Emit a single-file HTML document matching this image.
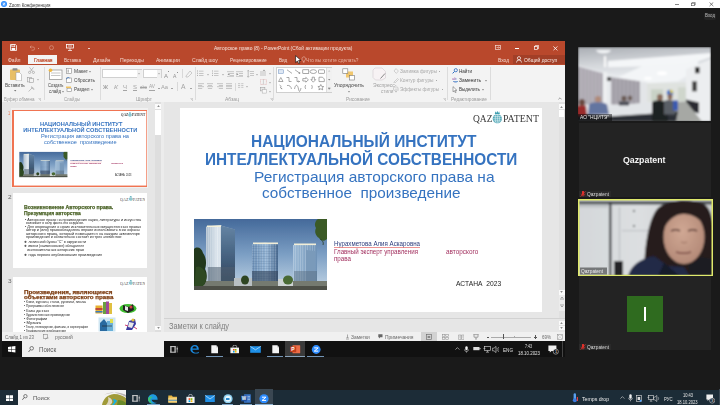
<!DOCTYPE html>
<html><head><meta charset="utf-8">
<style>
*{margin:0;padding:0;box-sizing:border-box}
html,body{width:720px;height:405px;overflow:hidden;background:#1a1a1a;font-family:"Liberation Sans",sans-serif;position:relative}
.a{position:absolute}
.t{position:absolute;white-space:pre;line-height:1}
</style></head><body>
<div class="a" style="left:0px;top:0px;width:720px;height:8px;background:#ffffff;"></div>
<svg class="a" style="left:1px;top:1px;" width="6" height="6" viewBox="0 0 6 6"><circle cx="3" cy="3" r="3" fill="#2d8cff"/><path d="M1.6 2.2h2.6L1.8 3.9h2.6" stroke="#fff" stroke-width="0.8" fill="none"/></svg>
<span class="t" id="t0" style="left:8.50px;top:3.05px;font-size:5px;color:#333;font-weight:normal;font-family:'Liberation Sans';transform:scaleX(0.8979);transform-origin:0 0;">Zoom Конференция</span>
<div class="a" style="left:675px;top:3.6px;width:3.5px;height:0.5px;background:#888;"></div>
<svg class="a" style="left:690.5px;top:2.2px;" width="5" height="4" viewBox="0 0 5 4"><rect x="0.4" y="1.2" width="3" height="2.5" fill="none" stroke="#555" stroke-width="0.6"/><path d="M1.2 1.2V0.4h3v2.6H3.4" fill="none" stroke="#555" stroke-width="0.6"/></svg>
<svg class="a" style="left:708.5px;top:2.2px;" width="5" height="4.5" viewBox="0 0 5 4.5"><path d="M0.5 0.4L4.3 4.1M4.3 0.4L0.5 4.1" stroke="#333" stroke-width="0.6"/></svg>
<div class="a" style="left:703.5px;top:12.5px;width:12.5px;height:7.5px;background:#242424;border-radius:2px"></div>
<span class="t" id="t1" style="left:705.00px;top:13.52px;font-size:4.8px;color:#bdbdbd;font-weight:normal;font-family:'Liberation Sans';transform:scaleX(0.9209);transform-origin:0 0;">Вход</span>
<div class="a" style="left:2px;top:41px;width:563px;height:300px;background:#e6e6e6;"></div>
<div class="a" style="left:2px;top:41px;width:563px;height:23.5px;background:#b9482c;"></div>
<svg class="a" style="left:10px;top:44px;" width="7" height="7" viewBox="0 0 7 7"><path d="M0.5 0.5h5l1 1v5h-6z" fill="none" stroke="#fff" stroke-width="0.8"/><rect x="1.8" y="0.9" width="3" height="1.8" fill="none" stroke="#fff" stroke-width="0.6"/><rect x="1.6" y="3.9" width="3.6" height="2.2" fill="#fff"/></svg>
<svg class="a" style="left:29px;top:45px;" width="6" height="6" viewBox="0 0 6 6"><path d="M1 2h3a1.6 1.6 0 0 1 0 3.2H2.5M1 2l1.3-1.3M1 2l1.3 1.3" fill="none" stroke="#dd9985" stroke-width="0.7"/></svg>
<div class="a" style="left:38px;top:47.5px;width:1px;height:1px;background:#dd9985;"></div>
<svg class="a" style="left:49px;top:45px;" width="5" height="5" viewBox="0 0 5 5"><circle cx="2.5" cy="2.7" r="2" fill="none" stroke="#dd9985" stroke-width="0.7"/></svg>
<svg class="a" style="left:66px;top:44px;" width="8" height="7" viewBox="0 0 8 7"><rect x="0.5" y="0.5" width="7" height="3.5" fill="none" stroke="#fff" stroke-width="0.8"/><path d="M4 4v2.5M2 6.5h4M2 2h4" stroke="#fff" stroke-width="0.7"/></svg>
<div class="a" style="left:88px;top:47.5px;width:1.5px;height:1px;background:#f0d0c8;"></div>
<span class="t" id="t2" style="left:213.80px;top:45.78px;font-size:5.2px;color:#f6e4dd;font-weight:normal;font-family:'Liberation Sans';transform:scaleX(0.9477);transform-origin:0 0;">Авторское право (8) - PowerPoint (Сбой активации продукта)</span>
<svg class="a" style="left:495px;top:45px;" width="6" height="5" viewBox="0 0 6 5"><rect x="0.4" y="0.4" width="5.2" height="4.2" fill="none" stroke="#f5dcd4" stroke-width="0.7"/><path d="M1.5 2.5h3M3.5 1.5l1 1-1 1" stroke="#f5dcd4" stroke-width="0.6" fill="none"/></svg>
<div class="a" style="left:515px;top:48px;width:3.8px;height:0.8px;background:#fff;"></div>
<svg class="a" style="left:534px;top:45px;" width="5" height="5" viewBox="0 0 5 5"><rect x="0.4" y="1.4" width="3.2" height="3.2" fill="none" stroke="#fff" stroke-width="0.7"/><path d="M1.4 1.4V0.4h3.2v3.2H3.6" fill="none" stroke="#fff" stroke-width="0.7"/></svg>
<svg class="a" style="left:553px;top:45.5px;" width="5" height="5" viewBox="0 0 5 5"><path d="M0.4 0.4L4.4 4.4M4.4 0.4L0.4 4.4" stroke="#fff" stroke-width="0.8"/></svg>
<div class="a" style="left:28px;top:54.8px;width:29px;height:9.7px;background:#f3f3f3;"></div>
<span class="t" id="t3" style="left:8.00px;top:57.91px;font-size:5.4px;color:#f3d8cf;font-weight:normal;font-family:'Liberation Sans';transform:scaleX(0.9423);transform-origin:0 0;">Файл</span>
<span class="t" id="t4" style="left:33.50px;top:57.91px;font-size:5.4px;color:#c24a2a;font-weight:normal;font-family:'Liberation Sans';transform:scaleX(0.9011);transform-origin:0 0;-webkit-text-stroke:0.2px #c24a2a;">Главная</span>
<span class="t" id="t5" style="left:64.00px;top:57.91px;font-size:5.4px;color:#f3d8cf;font-weight:normal;font-family:'Liberation Sans';transform:scaleX(0.8480);transform-origin:0 0;">Вставка</span>
<span class="t" id="t6" style="left:92.50px;top:57.91px;font-size:5.4px;color:#f3d8cf;font-weight:normal;font-family:'Liberation Sans';transform:scaleX(0.9655);transform-origin:0 0;">Дизайн</span>
<span class="t" id="t7" style="left:120.00px;top:57.91px;font-size:5.4px;color:#f3d8cf;font-weight:normal;font-family:'Liberation Sans';transform:scaleX(0.9487);transform-origin:0 0;">Переходы</span>
<span class="t" id="t8" style="left:156.20px;top:57.91px;font-size:5.4px;color:#f3d8cf;font-weight:normal;font-family:'Liberation Sans';transform:scaleX(0.9368);transform-origin:0 0;">Анимации</span>
<span class="t" id="t9" style="left:191.70px;top:57.91px;font-size:5.4px;color:#f3d8cf;font-weight:normal;font-family:'Liberation Sans';transform:scaleX(0.9329);transform-origin:0 0;">Слайд шоу</span>
<span class="t" id="t10" style="left:230.00px;top:57.91px;font-size:5.4px;color:#f3d8cf;font-weight:normal;font-family:'Liberation Sans';transform:scaleX(0.8817);transform-origin:0 0;">Рецензирование</span>
<span class="t" id="t11" style="left:278.70px;top:57.91px;font-size:5.4px;color:#f3d8cf;font-weight:normal;font-family:'Liberation Sans';transform:scaleX(0.8499);transform-origin:0 0;">Вид</span>
<span class="t" id="t12" style="left:305.80px;top:57.91px;font-size:5.4px;color:#e9b2a2;font-weight:normal;font-family:'Liberation Sans';transform:scaleX(0.8810);transform-origin:0 0;">Что вы хотите сделать?</span>
<svg class="a" style="left:300.5px;top:56px;" width="5" height="7" viewBox="0 0 5 7"><path d="M1 2.6a1.8 1.8 0 1 1 3.2 1.2c-0.5 0.6-0.8 0.9-0.8 1.6H2c0-0.7-0.3-1-0.6-1.4A1.8 1.8 0 0 1 1 2.6zM2 6.2h1.4" fill="none" stroke="#efc0b2" stroke-width="0.6"/></svg>
<span class="t" id="t13" style="left:498.00px;top:57.88px;font-size:5.2px;color:#f3d8cf;font-weight:normal;font-family:'Liberation Sans';transform:scaleX(0.9362);transform-origin:0 0;">Вход</span>
<div class="a" style="left:513px;top:55px;width:52px;height:8.8px;background:#a23f27;"></div>
<svg class="a" style="left:516px;top:56px;" width="6" height="7" viewBox="0 0 6 7"><circle cx="3" cy="2.2" r="1.6" fill="none" stroke="#fff" stroke-width="0.7"/><path d="M0.5 6.5a2.5 2.5 0 0 1 5 0" fill="none" stroke="#fff" stroke-width="0.7"/></svg>
<span class="t" id="t14" style="left:523.80px;top:57.81px;font-size:5.4px;color:#fbeee9;font-weight:normal;font-family:'Liberation Sans';transform:scaleX(0.9167);transform-origin:0 0;">Общий доступ</span>
<svg class="a" style="left:295px;top:54.5px;" width="7" height="9" viewBox="0 0 7 9"><path d="M0.6 0.6V7.6L2.4 6l1.3 2.6 1.2-.6L3.6 5.5H6z" fill="#fff" stroke="#000" stroke-width="0.6"/></svg>
<div class="a" style="left:2px;top:64.5px;width:563px;height:37px;background:#f3f3f3;"></div>
<div class="a" style="left:2px;top:101.5px;width:563px;height:0.8px;background:#d6d6d6;"></div>
<div class="a" style="left:181.6px;top:69px;width:0.6px;height:8.5px;background:#d8d8d8;"></div>
<div class="a" style="left:43.5px;top:66.5px;width:0.7px;height:33.5px;background:#dcdcdc;"></div>
<div class="a" style="left:100.4px;top:66.5px;width:0.7px;height:33.5px;background:#dcdcdc;"></div>
<div class="a" style="left:194.6px;top:66.5px;width:0.7px;height:33.5px;background:#dcdcdc;"></div>
<div class="a" style="left:273px;top:66.5px;width:0.7px;height:33.5px;background:#dcdcdc;"></div>
<div class="a" style="left:446.5px;top:66.5px;width:0.7px;height:33.5px;background:#dcdcdc;"></div>
<div class="a" style="left:490px;top:66.5px;width:0.7px;height:33.5px;background:#dcdcdc;"></div>
<svg class="a" style="left:9px;top:67.5px;" width="14" height="13" viewBox="0 0 14 13"><rect x="1" y="1.5" width="10" height="10.5" rx="0.8" fill="#e8bf66"/><rect x="3.5" y="0.3" width="5" height="2.2" rx="0.6" fill="#8d8d8d"/><path d="M7 4.5h3.5l2 2V12.8H7z" fill="#fff" stroke="#999" stroke-width="0.5"/></svg>
<span class="t" id="t15" style="left:5.00px;top:82.91px;font-size:5.4px;color:#444;font-weight:normal;font-family:'Liberation Sans';transform:scaleX(0.8618);transform-origin:0 0;">Вставить</span>
<svg class="a" style="left:14px;top:90px;" width="3" height="2" viewBox="0 0 3 2"><path d="M0 0h2.4L1.2 1.4z" fill="#777"/></svg>
<svg class="a" style="left:28px;top:67px;" width="7" height="7" viewBox="0 0 7 7"><circle cx="1.6" cy="5.4" r="1.1" fill="none" stroke="#9a9a9a" stroke-width="0.6"/><circle cx="5.4" cy="5.4" r="1.1" fill="none" stroke="#9a9a9a" stroke-width="0.6"/><path d="M2.3 4.5L5.5 0.3M4.7 4.5L1.5 0.3" stroke="#9a9a9a" stroke-width="0.6"/></svg>
<svg class="a" style="left:27px;top:76.5px;" width="8" height="6" viewBox="0 0 8 6"><rect x="0.4" y="0.4" width="4" height="4.5" fill="none" stroke="#a0a0a0" stroke-width="0.6"/><rect x="2.6" y="1.6" width="4" height="4" fill="#f3f3f3" stroke="#a0a0a0" stroke-width="0.6"/></svg>
<svg class="a" style="left:36.5px;top:79px;" width="2" height="2" viewBox="0 0 2 2"><path d="M0 0.2h2L1 1.4z" fill="#999"/></svg>
<svg class="a" style="left:28px;top:85.5px;" width="7" height="6" viewBox="0 0 7 6"><path d="M0.6 5.5L4 2M3 1.2l2.8 2.5M3.4 0.5l3 2.6" stroke="#a8a8a8" stroke-width="0.7" fill="none"/></svg>
<span class="t" id="t16" style="left:4.00px;top:96.68px;font-size:5.2px;color:#9a9a9a;font-weight:normal;font-family:'Liberation Sans';transform:scaleX(0.8652);transform-origin:0 0;">Буфер обмена</span>
<svg class="a" style="left:38px;top:97.5px;" width="3" height="3" viewBox="0 0 3 3"><path d="M0.3 0.3h2.4v2.4M1 1l1.7 1.7" fill="none" stroke="#aaa" stroke-width="0.5"/></svg>
<svg class="a" style="left:47.5px;top:67.5px;" width="15" height="12" viewBox="0 0 15 12"><rect x="1.5" y="2" width="12.5" height="9.5" fill="#fff" stroke="#8a8a8a" stroke-width="0.7"/><rect x="3" y="4.5" width="9.5" height="1" fill="#c8c8c8"/><rect x="3" y="7" width="9.5" height="1" fill="#c8c8c8"/><circle cx="2.5" cy="2.2" r="1.8" fill="#f0b840"/></svg>
<span class="t" id="t17" style="left:47.50px;top:82.91px;font-size:5.4px;color:#444;font-weight:normal;font-family:'Liberation Sans';transform:scaleX(0.7561);transform-origin:0 0;">Создать</span>
<span class="t" id="t18" style="left:48.50px;top:88.71px;font-size:5.4px;color:#444;font-weight:normal;font-family:'Liberation Sans';transform:scaleX(0.8000);transform-origin:0 0;">слайд</span>
<svg class="a" style="left:61.5px;top:90.5px;" width="2" height="2" viewBox="0 0 2 2"><path d="M0 0.2h2L1 1.4z" fill="#666"/></svg>
<svg class="a" style="left:65.5px;top:67.5px;" width="6" height="6" viewBox="0 0 6 6"><rect x="0.4" y="0.4" width="5.2" height="5.2" fill="#fff" stroke="#888" stroke-width="0.6"/><rect x="1.5" y="1.6" width="1.5" height="3" fill="#bbb"/></svg>
<span class="t" id="t19" style="left:73.50px;top:69.21px;font-size:5.4px;color:#444;font-weight:normal;font-family:'Liberation Sans';transform:scaleX(0.9171);transform-origin:0 0;">Макет</span>
<svg class="a" style="left:89px;top:71px;" width="2" height="2" viewBox="0 0 2 2"><path d="M0 0.2h2L1 1.4z" fill="#666"/></svg>
<svg class="a" style="left:65.5px;top:76.5px;" width="6" height="6" viewBox="0 0 6 6"><rect x="0.4" y="1" width="5.2" height="4.6" fill="#fff" stroke="#888" stroke-width="0.6"/><path d="M0.5 2.2a1.8 1.8 0 0 1 3 -1.2" stroke="#2a6bc0" stroke-width="0.8" fill="none"/></svg>
<span class="t" id="t20" style="left:73.50px;top:78.21px;font-size:5.4px;color:#444;font-weight:normal;font-family:'Liberation Sans';transform:scaleX(0.8761);transform-origin:0 0;">Сбросить</span>
<svg class="a" style="left:65.5px;top:85.5px;" width="6" height="6" viewBox="0 0 6 6"><rect x="1" y="2.2" width="4.6" height="3.4" fill="#fff" stroke="#888" stroke-width="0.6"/><rect x="0" y="0.6" width="5" height="1.2" fill="#f0b840"/></svg>
<span class="t" id="t21" style="left:73.50px;top:87.21px;font-size:5.4px;color:#444;font-weight:normal;font-family:'Liberation Sans';transform:scaleX(0.8694);transform-origin:0 0;">Раздел</span>
<svg class="a" style="left:90.5px;top:89px;" width="2" height="2" viewBox="0 0 2 2"><path d="M0 0.2h2L1 1.4z" fill="#666"/></svg>
<span class="t" id="t22" style="left:64.00px;top:96.68px;font-size:5.2px;color:#9a9a9a;font-weight:normal;font-family:'Liberation Sans';transform:scaleX(0.8285);transform-origin:0 0;">Слайды</span>
<div class="a" style="left:102.2px;top:69.2px;width:40px;height:9.2px;background:#fff;border:0.6px solid #d0d0d0"></div>
<div class="a" style="left:137.2px;top:69.8px;width:4.5px;height:8px;background:#f0f0f0;"></div>
<svg class="a" style="left:138.4px;top:73.2px;" width="2" height="1.5" viewBox="0 0 2 1.5"><path d="M0 0.2h2L1 1.4z" fill="#999"/></svg>
<div class="a" style="left:142.5px;top:69.2px;width:19px;height:9.2px;background:#fff;border:0.6px solid #d0d0d0"></div>
<div class="a" style="left:157.3px;top:69.8px;width:3.8px;height:8px;background:#f0f0f0;"></div>
<svg class="a" style="left:158.3px;top:73.2px;" width="2" height="1.5" viewBox="0 0 2 1.5"><path d="M0 0.2h2L1 1.4z" fill="#999"/></svg>
<span class="t" id="t23" style="left:163.50px;top:72.70px;font-size:6px;color:#909090;font-weight:normal;font-family:'Liberation Sans';transform:scaleX(0.9961);transform-origin:0 0;">A</span>
<span class="t" id="t24" style="left:173.00px;top:73.55px;font-size:5px;color:#909090;font-weight:normal;font-family:'Liberation Sans';transform:scaleX(1.0168);transform-origin:0 0;">A</span>
<div class="a" style="left:167.5px;top:70.5px;width:1.2px;height:0.5px;background:#909090;"></div>
<div class="a" style="left:176.5px;top:71.5px;width:1.2px;height:0.5px;background:#909090;"></div>
<span class="t" id="t25" style="left:102.50px;top:84.74px;font-size:5.6px;color:#a4a4a4;font-weight:bold;font-family:'Liberation Sans';transform:scaleX(0.9877);transform-origin:0 0;">Ж</span>
<span class="t" id="t26" style="left:113.50px;top:84.74px;font-size:5.6px;color:#a4a4a4;font-weight:normal;font-family:'Liberation Sans';transform:scaleX(1.2133);transform-origin:0 0;font-style:italic;">К</span>
<span class="t" id="t27" style="left:122.50px;top:84.74px;font-size:5.6px;color:#a4a4a4;font-weight:normal;font-family:'Liberation Sans';transform:scaleX(1.0711);transform-origin:0 0;text-decoration:underline;">Ч</span>
<span class="t" id="t28" style="left:132.50px;top:84.74px;font-size:5.6px;color:#a4a4a4;font-weight:normal;font-family:'Liberation Sans';transform:scaleX(1.0711);transform-origin:0 0;text-decoration:underline;">S</span>
<span class="t" id="t29" style="left:140.00px;top:85.59px;font-size:4.6px;color:#a4a4a4;font-weight:normal;font-family:'Liberation Sans';transform:scaleX(0.9432);transform-origin:0 0;text-decoration:line-through;">abc</span>
<span class="t" id="t30" style="left:149.00px;top:84.25px;font-size:5px;color:#a4a4a4;font-weight:normal;font-family:'Liberation Sans';transform:scaleX(0.9505);transform-origin:0 0;">AV</span>
<div class="a" style="left:149px;top:90px;width:6px;height:0.5px;background:#a4a4a4;"></div>
<div class="a" style="left:158px;top:88px;width:1.5px;height:0.6px;background:#a4a4a4;"></div>
<span class="t" id="t31" style="left:161.00px;top:84.91px;font-size:5.4px;color:#a4a4a4;font-weight:normal;font-family:'Liberation Sans';transform:scaleX(1.0616);transform-origin:0 0;">Aa</span>
<div class="a" style="left:171px;top:88px;width:1.5px;height:0.6px;background:#a4a4a4;"></div>
<div class="a" style="left:176.5px;top:82px;width:0.6px;height:9px;background:#d8d8d8;"></div>
<span class="t" id="t32" style="left:181.00px;top:84.47px;font-size:6.5px;color:#a4a4a4;font-weight:normal;font-family:'Liberation Sans';transform:scaleX(1.0360);transform-origin:0 0;">A</span>
<div class="a" style="left:190px;top:88px;width:1.5px;height:0.6px;background:#a4a4a4;"></div>
<svg class="a" style="left:185px;top:69px;" width="8" height="9" viewBox="0 0 8 9"><path d="M1 7l4-5 2 2-4 4H1z" fill="none" stroke="#b0b0b0" stroke-width="0.6"/></svg>
<span class="t" id="t33" style="left:136.00px;top:96.68px;font-size:5.2px;color:#9a9a9a;font-weight:normal;font-family:'Liberation Sans';transform:scaleX(0.9369);transform-origin:0 0;">Шрифт</span>
<svg class="a" style="left:189.5px;top:97.5px;" width="3" height="3" viewBox="0 0 3 3"><path d="M0.3 0.3h2.4v2.4M1 1l1.7 1.7" fill="none" stroke="#aaa" stroke-width="0.5"/></svg>
<svg class="a" style="left:197px;top:70px;" width="7.5" height="7.800000000000001" viewBox="0 0 7.5 7.800000000000001"><rect x="0" y="0.50" width="1" height="1" fill="#a8a8a8"/><rect x="2" y="0.80" width="4.5" height="0.6" fill="#a8a8a8"/><rect x="0" y="2.70" width="1" height="1" fill="#a8a8a8"/><rect x="2" y="3.00" width="4.5" height="0.6" fill="#a8a8a8"/><rect x="0" y="4.90" width="1" height="1" fill="#a8a8a8"/><rect x="2" y="5.20" width="4.5" height="0.6" fill="#a8a8a8"/></svg>
<svg class="a" style="left:207px;top:74px;" width="2" height="2" viewBox="0 0 2 2"><path d="M0 0.2h2L1 1.4z" fill="#999"/></svg>
<svg class="a" style="left:212px;top:70px;" width="7.5" height="7.800000000000001" viewBox="0 0 7.5 7.800000000000001"><rect x="0" y="0.50" width="1" height="1" fill="#a8a8a8"/><rect x="2" y="0.80" width="4.5" height="0.6" fill="#a8a8a8"/><rect x="0" y="2.70" width="1" height="1" fill="#a8a8a8"/><rect x="2" y="3.00" width="4.5" height="0.6" fill="#a8a8a8"/><rect x="0" y="4.90" width="1" height="1" fill="#a8a8a8"/><rect x="2" y="5.20" width="4.5" height="0.6" fill="#a8a8a8"/></svg>
<svg class="a" style="left:222px;top:74px;" width="2" height="2" viewBox="0 0 2 2"><path d="M0 0.2h2L1 1.4z" fill="#999"/></svg>
<svg class="a" style="left:226.5px;top:70.5px;" width="8" height="6" viewBox="0 0 8 6"><rect x="0" y="0.5" width="7" height="0.6" fill="#aaa"/><rect x="3" y="2.3" width="4" height="0.6" fill="#aaa"/><rect x="3" y="4" width="4" height="0.6" fill="#aaa"/><rect x="0" y="5.5" width="7" height="0.6" fill="#aaa"/><path d="M2.5 2l-2 1.3 2 1.3" fill="#8a8a8a"/></svg>
<svg class="a" style="left:236px;top:70.5px;" width="8" height="6" viewBox="0 0 8 6"><rect x="0" y="0.5" width="7" height="0.6" fill="#aaa"/><rect x="3" y="2.3" width="4" height="0.6" fill="#aaa"/><rect x="3" y="4" width="4" height="0.6" fill="#aaa"/><rect x="0" y="5.5" width="7" height="0.6" fill="#aaa"/><path d="M0.5 2l2 1.3-2 1.3" fill="#8a8a8a"/></svg>
<svg class="a" style="left:246.5px;top:70px;" width="8" height="8" viewBox="0 0 8 8"><rect x="3" y="1" width="4" height="0.6" fill="#aaa"/><rect x="3" y="3" width="4" height="0.6" fill="#aaa"/><rect x="3" y="5" width="4" height="0.6" fill="#aaa"/><path d="M1.2 0.3v7M0.2 1.4l1-1 1 1M0.2 6.2l1 1 1-1" stroke="#8a8a8a" stroke-width="0.5" fill="none"/></svg>
<svg class="a" style="left:256px;top:74px;" width="2" height="2" viewBox="0 0 2 2"><path d="M0 0.2h2L1 1.4z" fill="#999"/></svg>
<svg class="a" style="left:197.5px;top:82.5px;" width="7" height="9.0" viewBox="0 0 7 9.0"><rect x="0.00" y="0.50" width="6.00" height="0.6" fill="#a8a8a8"/><rect x="0.00" y="2.00" width="4.20" height="0.6" fill="#a8a8a8"/><rect x="0.00" y="3.50" width="6.00" height="0.6" fill="#a8a8a8"/><rect x="0.00" y="5.00" width="4.20" height="0.6" fill="#a8a8a8"/></svg>
<svg class="a" style="left:207px;top:82.5px;" width="7" height="9.0" viewBox="0 0 7 9.0"><rect x="0.00" y="0.50" width="6.00" height="0.6" fill="#a8a8a8"/><rect x="0.90" y="2.00" width="4.20" height="0.6" fill="#a8a8a8"/><rect x="0.00" y="3.50" width="6.00" height="0.6" fill="#a8a8a8"/><rect x="0.90" y="5.00" width="4.20" height="0.6" fill="#a8a8a8"/></svg>
<svg class="a" style="left:216.5px;top:82.5px;" width="7" height="9.0" viewBox="0 0 7 9.0"><rect x="0.00" y="0.50" width="6.00" height="0.6" fill="#a8a8a8"/><rect x="1.80" y="2.00" width="4.20" height="0.6" fill="#a8a8a8"/><rect x="0.00" y="3.50" width="6.00" height="0.6" fill="#a8a8a8"/><rect x="1.80" y="5.00" width="4.20" height="0.6" fill="#a8a8a8"/></svg>
<svg class="a" style="left:226px;top:82.5px;" width="7" height="9.0" viewBox="0 0 7 9.0"><rect x="0.00" y="0.50" width="6.00" height="0.6" fill="#a8a8a8"/><rect x="0.00" y="2.00" width="6.00" height="0.6" fill="#a8a8a8"/><rect x="0.00" y="3.50" width="6.00" height="0.6" fill="#a8a8a8"/><rect x="0.00" y="5.00" width="6.00" height="0.6" fill="#a8a8a8"/></svg>
<div class="a" style="left:234.5px;top:83px;width:0.6px;height:8px;background:#d8d8d8;"></div>
<svg class="a" style="left:238px;top:82.5px;" width="6" height="6" viewBox="0 0 6 6"><rect x="0" y="0.5" width="2.2" height="0.6" fill="#aaa"/><rect x="3.2" y="0.5" width="2.2" height="0.6" fill="#aaa"/><rect x="0" y="2.2" width="2.2" height="0.6" fill="#aaa"/><rect x="3.2" y="2.2" width="2.2" height="0.6" fill="#aaa"/><rect x="0" y="3.9" width="2.2" height="0.6" fill="#aaa"/><rect x="3.2" y="3.9" width="2.2" height="0.6" fill="#aaa"/></svg>
<svg class="a" style="left:246px;top:86px;" width="2" height="2" viewBox="0 0 2 2"><path d="M0 0.2h2L1 1.4z" fill="#999"/></svg>
<svg class="a" style="left:259.5px;top:69px;" width="7" height="8" viewBox="0 0 7 8"><path d="M1 7V2M3 7V2M5 7V2" stroke="#b0b0b0" stroke-width="0.7"/><path d="M4 0.5l1.2 1.5h-2.4z" fill="#999"/></svg>
<svg class="a" style="left:268.5px;top:72.5px;" width="2" height="2" viewBox="0 0 2 2"><path d="M0 0.2h2L1 1.4z" fill="#999"/></svg>
<svg class="a" style="left:259.5px;top:78.5px;" width="7" height="6" viewBox="0 0 7 6"><rect x="0.4" y="0.4" width="6" height="5" fill="none" stroke="#d49090" stroke-width="0.5" stroke-dasharray="0.8 0.5"/><path d="M3.4 0.4v5" stroke="#aaa" stroke-width="0.5"/></svg>
<svg class="a" style="left:268.5px;top:81.5px;" width="2" height="2" viewBox="0 0 2 2"><path d="M0 0.2h2L1 1.4z" fill="#999"/></svg>
<svg class="a" style="left:259.5px;top:87px;" width="7" height="7" viewBox="0 0 7 7"><rect x="0.4" y="0.4" width="4.5" height="3.5" fill="#e6e6e6" stroke="#999" stroke-width="0.5"/><rect x="2.2" y="2.6" width="4.5" height="3.5" fill="#f8f8f8" stroke="#aaa" stroke-width="0.5"/></svg>
<svg class="a" style="left:268.5px;top:90.5px;" width="2" height="2" viewBox="0 0 2 2"><path d="M0 0.2h2L1 1.4z" fill="#999"/></svg>
<span class="t" id="t34" style="left:224.50px;top:96.68px;font-size:5.2px;color:#9a9a9a;font-weight:normal;font-family:'Liberation Sans';transform:scaleX(0.9614);transform-origin:0 0;">Абзац</span>
<svg class="a" style="left:270px;top:97.5px;" width="3" height="3" viewBox="0 0 3 3"><path d="M0.3 0.3h2.4v2.4M1 1l1.7 1.7" fill="none" stroke="#aaa" stroke-width="0.5"/></svg>
<div class="a" style="left:276.3px;top:67.3px;width:56px;height:25.3px;background:#fff;border:0.6px solid #cfcfcf"></div>
<div class="a" style="left:326.2px;top:67.8px;width:5.6px;height:24.5px;background:#f1f1f1;border-left:0.5px solid #ddd"></div>
<svg class="a" style="left:327.5px;top:70px;" width="3" height="2" viewBox="0 0 3 2"><path d="M0 1.6h2.4L1.2 0.2z" fill="#bbb"/></svg>
<svg class="a" style="left:327.5px;top:78.5px;" width="3" height="2" viewBox="0 0 3 2"><path d="M0 0h2.4L1.2 1.4z" fill="#888"/></svg>
<svg class="a" style="left:327.5px;top:87px;" width="3" height="3" viewBox="0 0 3 3"><path d="M0 0.3h2.4M0 1h2.4L1.2 2.4z" fill="#888" stroke="#888" stroke-width="0.3"/></svg>
<svg class="a" style="left:277px;top:68px;" width="49" height="24" viewBox="0 0 49 24">
<rect x="1.5" y="1.8" width="5" height="3.6" fill="#dfe8f4" stroke="#6a8ec0" stroke-width="0.5"/>
<path d="M10 1.8l5 3.6" stroke="#707070" stroke-width="0.6"/>
<path d="M18 1.8l5 3.6M23 5.4l-1.5-0.2M23 5.4l-0.4-1.3" stroke="#707070" stroke-width="0.6"/>
<rect x="25.8" y="1.8" width="6" height="3.6" fill="none" stroke="#707070" stroke-width="0.6"/>
<ellipse cx="36.3" cy="3.6" rx="3.2" ry="1.9" fill="none" stroke="#707070" stroke-width="0.6"/>
<rect x="41.5" y="1.8" width="6" height="3.6" rx="0.6" fill="none" stroke="#707070" stroke-width="0.6"/>
<path d="M1.6 13.5l2.2-4 2.2 4z" fill="none" stroke="#707070" stroke-width="0.6"/>
<path d="M9.5 9.5h2.5v4h2.5" fill="none" stroke="#707070" stroke-width="0.6"/>
<path d="M17.5 9.5h2.5v4h2.5M22.5 13.5l-1-0.8M22.5 13.5l-1 0.8" fill="none" stroke="#707070" stroke-width="0.6"/>
<path d="M25.8 10.6h3v-1.2l2.6 2.4-2.6 2.4v-1.2h-3z" fill="none" stroke="#707070" stroke-width="0.6"/>
<path d="M35.2 9.2v2.4h-1.3l2.4 2.6 2.4-2.6h-1.3V9.2z" fill="none" stroke="#707070" stroke-width="0.6"/>
<path d="M42 9.2h3.5l1.8 1.8v2.6H42z" fill="none" stroke="#707070" stroke-width="0.6"/>
<path d="M2.5 17l1.8 1.5-1 0.8 1.5 1.8M4.8 21.1l-0.2-1.2" fill="none" stroke="#707070" stroke-width="0.6"/>
<path d="M10 17.5c2.5-0.5 4 1 4.5 3.5" fill="none" stroke="#707070" stroke-width="0.6"/>
<path d="M17.5 21c1-5 3-5 4 0s2 1 2.5 -1" fill="none" stroke="#707070" stroke-width="0.6"/>
<path d="M28.8 17c-1 1-1 3 0 4" fill="none" stroke="#707070" stroke-width="0.6"/>
<path d="M34.5 17c1 1 1 3 0 4" fill="none" stroke="#707070" stroke-width="0.6"/>
<path d="M43.8 16.5l0.9 1.9 2 0.2-1.5 1.3 0.5 2-1.9-1.1-1.9 1.1 0.5-2-1.5-1.3 2-0.2z" fill="none" stroke="#707070" stroke-width="0.6"/>
</svg>
<svg class="a" style="left:342px;top:67.5px;" width="14" height="13" viewBox="0 0 14 13"><rect x="4" y="3.5" width="7" height="6" fill="#f0b840" opacity="0.75"/><rect x="0.8" y="0.8" width="5" height="4.5" fill="#fff" stroke="#777" stroke-width="0.6"/><rect x="7.5" y="7.5" width="5" height="4.5" fill="#fff" stroke="#777" stroke-width="0.6"/></svg>
<span class="t" id="t35" style="left:334.00px;top:82.71px;font-size:5.4px;color:#444;font-weight:normal;font-family:'Liberation Sans';transform:scaleX(0.9352);transform-origin:0 0;">Упорядочить</span>
<svg class="a" style="left:348px;top:90.5px;" width="2" height="2" viewBox="0 0 2 2"><path d="M0 0.2h2L1 1.4z" fill="#666"/></svg>
<svg class="a" style="left:371.5px;top:67px;" width="15" height="14" viewBox="0 0 15 14"><path d="M3 1h7l3.5 3.5v6.5L10 13H3.5L1 10.5V3z" fill="#f7f2f4" stroke="#d7d0d4" stroke-width="0.7"/><path d="M8.5 11.5l4.5-5" stroke="#888" stroke-width="1"/></svg>
<span class="t" id="t36" style="left:372.50px;top:82.71px;font-size:5.4px;color:#a0a0a0;font-weight:normal;font-family:'Liberation Sans';transform:scaleX(0.9365);transform-origin:0 0;">Экспресс-</span>
<span class="t" id="t37" style="left:380.50px;top:88.71px;font-size:5.4px;color:#a0a0a0;font-weight:normal;font-family:'Liberation Sans';transform:scaleX(0.8715);transform-origin:0 0;">стили</span>
<svg class="a" style="left:394.5px;top:90.5px;" width="2" height="2" viewBox="0 0 2 2"><path d="M0 0.2h2L1 1.4z" fill="#999"/></svg>
<svg class="a" style="left:393px;top:67.5px;" width="6" height="6" viewBox="0 0 6 6"><path d="M1 3l2-2.4 2.4 2.4-2 2.4z" fill="none" stroke="#b8b8b8" stroke-width="0.6"/></svg>
<span class="t" id="t38" style="left:399.50px;top:69.21px;font-size:5.4px;color:#a8a8a8;font-weight:normal;font-family:'Liberation Sans';transform:scaleX(0.8987);transform-origin:0 0;">Заливка фигуры</span>
<div class="a" style="left:439px;top:71px;width:1.3px;height:0.6px;background:#aaa;"></div>
<svg class="a" style="left:393px;top:76.5px;" width="6" height="6" viewBox="0 0 6 6"><path d="M1 5l3.5-3.5 1 1L2 6H1z" fill="none" stroke="#b8b8b8" stroke-width="0.6"/></svg>
<span class="t" id="t39" style="left:399.50px;top:78.21px;font-size:5.4px;color:#a8a8a8;font-weight:normal;font-family:'Liberation Sans';transform:scaleX(0.8885);transform-origin:0 0;">Контур фигуры</span>
<div class="a" style="left:436px;top:80px;width:1.3px;height:0.6px;background:#aaa;"></div>
<svg class="a" style="left:393px;top:85.5px;" width="6" height="6" viewBox="0 0 6 6"><rect x="0.5" y="1" width="4.5" height="3.5" rx="1" fill="none" stroke="#b8b8b8" stroke-width="0.6"/><rect x="1.5" y="2.5" width="4.5" height="2.5" rx="1" fill="#ddd"/></svg>
<span class="t" id="t40" style="left:399.50px;top:87.21px;font-size:5.4px;color:#a8a8a8;font-weight:normal;font-family:'Liberation Sans';transform:scaleX(0.8679);transform-origin:0 0;">Эффекты фигуры</span>
<div class="a" style="left:441.5px;top:89px;width:1.3px;height:0.6px;background:#aaa;"></div>
<span class="t" id="t41" style="left:346.00px;top:96.68px;font-size:5.2px;color:#9a9a9a;font-weight:normal;font-family:'Liberation Sans';transform:scaleX(0.9187);transform-origin:0 0;">Рисование</span>
<span class="t" id="t42" style="left:360.50px;top:96.68px;font-size:5.2px;color:#9a9a9a;font-weight:normal;font-family:'Liberation Sans';"></span>
<svg class="a" style="left:443px;top:97.5px;" width="3" height="3" viewBox="0 0 3 3"><path d="M0.3 0.3h2.4v2.4M1 1l1.7 1.7" fill="none" stroke="#aaa" stroke-width="0.5"/></svg>
<svg class="a" style="left:452px;top:68px;" width="6" height="6" viewBox="0 0 6 6"><circle cx="3.8" cy="2.2" r="1.6" fill="none" stroke="#2a6bc0" stroke-width="0.8"/><path d="M2.6 3.4L0.6 5.4" stroke="#2a6bc0" stroke-width="1"/></svg>
<span class="t" id="t43" style="left:459.00px;top:69.21px;font-size:5.4px;color:#333;font-weight:normal;font-family:'Liberation Sans';transform:scaleX(0.8447);transform-origin:0 0;">Найти</span>
<svg class="a" style="left:451.5px;top:76px;" width="7" height="7" viewBox="0 0 7 7"><text x="0" y="4" font-size="4" fill="#8a5ab0" font-family="Liberation Sans">ab</text><path d="M1 5.5h5" stroke="#2a6bc0" stroke-width="0.6"/><text x="2" y="7" font-size="2.5" fill="#2a6bc0" font-family="Liberation Sans">ac</text></svg>
<span class="t" id="t44" style="left:459.00px;top:78.21px;font-size:5.4px;color:#333;font-weight:normal;font-family:'Liberation Sans';transform:scaleX(0.9078);transform-origin:0 0;">Заменить</span>
<svg class="a" style="left:484.5px;top:80px;" width="2" height="2" viewBox="0 0 2 2"><path d="M0 0.2h2L1 1.4z" fill="#666"/></svg>
<svg class="a" style="left:452px;top:85.5px;" width="6" height="7" viewBox="0 0 6 7"><path d="M1 0.6v5.2l1.3-1.1 1 2 0.8-0.4-1-2h1.8z" fill="#fff" stroke="#555" stroke-width="0.5"/></svg>
<span class="t" id="t45" style="left:459.00px;top:87.21px;font-size:5.4px;color:#333;font-weight:normal;font-family:'Liberation Sans';transform:scaleX(0.8442);transform-origin:0 0;">Выделить</span>
<svg class="a" style="left:481.5px;top:89px;" width="2" height="2" viewBox="0 0 2 2"><path d="M0 0.2h2L1 1.4z" fill="#666"/></svg>
<span class="t" id="t46" style="left:451.00px;top:96.68px;font-size:5.2px;color:#9a9a9a;font-weight:normal;font-family:'Liberation Sans';transform:scaleX(0.9107);transform-origin:0 0;">Редактирование</span>
<svg class="a" style="left:557.5px;top:97px;" width="4" height="3" viewBox="0 0 4 3"><path d="M0.4 2.4L2 0.8 3.6 2.4" fill="none" stroke="#666" stroke-width="0.6"/></svg>
<div class="a" style="left:2px;top:102.3px;width:159px;height:229.7px;background:#e6e6e6;"></div>
<div class="a" style="left:155px;top:102.3px;width:6px;height:229.7px;background:#dedede;"></div>
<div class="a" style="left:155px;top:104px;width:6px;height:4.5px;background:#fbfbfb;"></div>
<svg class="a" style="left:156.5px;top:105.2px;" width="3" height="2" viewBox="0 0 3 2"><path d="M0.2 1.8L1.5 0.3 2.8 1.8z" fill="#666"/></svg>
<div class="a" style="left:155.3px;top:110px;width:5.4px;height:25px;background:#ffffff;"></div>
<div class="a" style="left:155px;top:325.8px;width:6px;height:4.5px;background:#fbfbfb;"></div>
<svg class="a" style="left:156.5px;top:327.1px;" width="3" height="2" viewBox="0 0 3 2"><path d="M0.2 0.2L1.5 1.7 2.8 0.2z" fill="#666"/></svg>
<div class="a" style="left:161px;top:102.3px;width:2.5px;height:229.7px;background:#ececec;"></div>
<div class="a" style="left:163.5px;top:102.3px;width:395px;height:216px;background:#e6e6e6;"></div>
<div class="a" style="left:558.5px;top:102.3px;width:6.5px;height:216px;background:#e0e0e0;"></div>
<div class="a" style="left:558.5px;top:104.2px;width:6px;height:4.7px;background:#fbfbfb;"></div>
<svg class="a" style="left:560px;top:105.5px;" width="3" height="2" viewBox="0 0 3 2"><path d="M0.2 1.8L1.5 0.3 2.8 1.8z" fill="#666"/></svg>
<div class="a" style="left:558.8px;top:110px;width:5.4px;height:7.2px;background:#ffffff;"></div>
<div class="a" style="left:558.5px;top:290px;width:6px;height:21px;background:#ececec;"></div>
<div class="a" style="left:558.5px;top:290px;width:6px;height:4.5px;background:#fbfbfb;"></div>
<svg class="a" style="left:560px;top:291.3px;" width="3" height="2" viewBox="0 0 3 2"><path d="M0.2 0.2L1.5 1.7 2.8 0.2z" fill="#666"/></svg>
<svg class="a" style="left:559.5px;top:296px;" width="4" height="12" viewBox="0 0 4 12"><path d="M0.5 2.5L2 1 3.5 2.5M0.5 4L2 2.5 3.5 4M0.5 8L2 9.5 3.5 8M0.5 9.5L2 11 3.5 9.5" fill="none" stroke="#777" stroke-width="0.6"/></svg>
<div class="a" style="left:163.5px;top:318px;width:401.5px;height:14px;background:#e6e6e6;border-top:0.8px solid #d2d2d2"></div>
<span class="t" id="t47" style="left:168.90px;top:322.32px;font-size:8.8px;color:#808080;font-weight:normal;font-family:'Liberation Sans';transform:scaleX(0.8419);transform-origin:0 0;">Заметки к слайду</span>
<div class="a" style="left:558.5px;top:320.5px;width:6px;height:4.2px;background:#fbfbfb;"></div>
<svg class="a" style="left:560px;top:321.5px;" width="3" height="2" viewBox="0 0 3 2"><path d="M0.2 1.8L1.5 0.3 2.8 1.8z" fill="#666"/></svg>
<div class="a" style="left:558.5px;top:326px;width:6px;height:4.2px;background:#fbfbfb;"></div>
<svg class="a" style="left:560px;top:327.2px;" width="3" height="2" viewBox="0 0 3 2"><path d="M0.2 0.2L1.5 1.7 2.8 0.2z" fill="#666"/></svg>
<div class="a" style="left:180px;top:107.5px;width:362px;height:204px;background:#fff;transform:scale(1.0);transform-origin:0 0;overflow:hidden">
<span class="t" id="t48" style="left:292.50px;top:5.67px;font-size:11px;color:#3a3a3a;font-weight:normal;font-family:'Liberation Serif';transform:scaleX(0.8625);transform-origin:0 0;">QAZ</span>
<svg class="a" style="left:311px;top:3px;" width="13" height="13" viewBox="0 0 13 13"><circle cx="6.3" cy="7.8" r="4.6" fill="#3f9fb0"/><path d="M1.7000000000000002 7.8h9.2M6.3 3.2v9.2M2.39 5.73h7.819999999999999M2.39 9.87h7.819999999999999" stroke="#fff" stroke-width="0.5519999999999999"/><ellipse cx="6.3" cy="7.8" rx="2.07" ry="4.6" fill="none" stroke="#fff" stroke-width="0.5519999999999999"/><path d="M3.77 2.9699999999999998l0.69 -2.76l0.9199999999999999 1.8399999999999999l0.9199999999999999 -2.3l0.9199999999999999 2.3l0.9199999999999999 -1.8399999999999999l0.69 2.76z" fill="#3f9fb0"/></svg>
<span class="t" id="t49" style="left:323.00px;top:5.67px;font-size:11px;color:#3a3a3a;font-weight:normal;font-family:'Liberation Serif';transform:scaleX(0.9014);transform-origin:0 0;">PATENT</span>
<span class="t" id="t50" style="left:70.90px;top:26.70px;font-size:16px;color:#3573c0;font-weight:bold;font-family:'Liberation Sans';transform:scaleX(0.9677);transform-origin:0 0;">НАЦИОНАЛЬНЫЙ ИНСТИТУТ</span>
<span class="t" id="t51" style="left:25.40px;top:44.24px;font-size:15.6px;color:#3573c0;font-weight:bold;font-family:'Liberation Sans';transform:scaleX(0.9836);transform-origin:0 0;">ИНТЕЛЛЕКТУАЛЬНОЙ СОБСТВЕННОСТИ</span>
<span class="t" id="t52" style="left:74.00px;top:62.42px;font-size:14.8px;color:#3573c0;font-weight:normal;font-family:'Liberation Sans';transform:scaleX(1.0455);transform-origin:0 0;">Регистрация авторского права на</span>
<span class="t" id="t53" style="left:82.20px;top:78.42px;font-size:14.8px;color:#3573c0;font-weight:normal;font-family:'Liberation Sans';transform:scaleX(1.0344);transform-origin:0 0;">собственное  произведение</span>
<div class="a" style="left:14px;top:111.4px;width:133px;height:71px;overflow:hidden"><svg class="a" style="left:0;top:0" width="133" height="71" viewBox="0 0 133 71" preserveAspectRatio="none">
<defs>
<filter id="cb" x="-2%" y="-2%" width="104%" height="104%"><feGaussianBlur stdDeviation="0.45"/></filter>
<linearGradient id="sky" x1="0" y1="0" x2="0" y2="1"><stop offset="0" stop-color="#44699a"/><stop offset="0.5" stop-color="#7c9fc4"/><stop offset="1" stop-color="#c4d6e6"/></linearGradient>
<linearGradient id="b1l" x1="0" y1="0" x2="1" y2="0"><stop offset="0" stop-color="#aabccc"/><stop offset="0.4" stop-color="#dde6ee"/><stop offset="1" stop-color="#8aa2ba"/></linearGradient>
<linearGradient id="b1r" x1="0" y1="0" x2="0" y2="1"><stop offset="0" stop-color="#6484a4"/><stop offset="0.5" stop-color="#44607e"/><stop offset="1" stop-color="#2e3e50"/></linearGradient>
<linearGradient id="b2" x1="0" y1="0" x2="1" y2="0"><stop offset="0" stop-color="#6a8eb6"/><stop offset="0.55" stop-color="#94b4d4"/><stop offset="1" stop-color="#4a6a90"/></linearGradient>
<linearGradient id="b3" x1="0" y1="0" x2="1" y2="0"><stop offset="0" stop-color="#9cbad6"/><stop offset="1" stop-color="#6f92b6"/></linearGradient>
</defs>
<g filter="url(#cb)">
<rect width="133" height="71" fill="url(#sky)"/>
<path d="M12 7.5l15 -1.5l1 1l13 3.5V71H12z" fill="url(#b1l)"/>
<rect x="12.0" y="8" width="0.6" height="60" fill="#ffffff" opacity="0.35"/><rect x="14.2" y="8" width="0.6" height="60" fill="#ffffff" opacity="0.35"/><rect x="16.4" y="8" width="0.6" height="60" fill="#ffffff" opacity="0.35"/><rect x="18.6" y="8" width="0.6" height="60" fill="#ffffff" opacity="0.35"/><rect x="20.8" y="8" width="0.6" height="60" fill="#ffffff" opacity="0.35"/><rect x="23.0" y="8" width="0.6" height="60" fill="#ffffff" opacity="0.35"/><rect x="25.2" y="8" width="0.6" height="60" fill="#ffffff" opacity="0.35"/>
<path d="M27 6.5L41 10.5V71H27z" fill="url(#b1r)"/>
<rect x="13" y="6.5" width="14" height="1.5" fill="#f4f0d8"/>
<rect x="14" y="48" width="27" height="23" fill="#4e5e70" opacity="0.55"/>
<path d="M58 25l13 -1.5l13 2V71H58z" fill="url(#b2)"/>
<rect x="58.0" y="25" width="0.5" height="40" fill="#d8e6f2" opacity="0.5"/><rect x="60.6" y="25" width="0.5" height="40" fill="#d8e6f2" opacity="0.5"/><rect x="63.2" y="25" width="0.5" height="40" fill="#d8e6f2" opacity="0.5"/><rect x="65.8" y="25" width="0.5" height="40" fill="#d8e6f2" opacity="0.5"/><rect x="68.4" y="25" width="0.5" height="40" fill="#d8e6f2" opacity="0.5"/><rect x="71.0" y="25" width="0.5" height="40" fill="#d8e6f2" opacity="0.5"/><rect x="73.6" y="25" width="0.5" height="40" fill="#d8e6f2" opacity="0.5"/><rect x="76.2" y="25" width="0.5" height="40" fill="#d8e6f2" opacity="0.5"/><rect x="78.8" y="25" width="0.5" height="40" fill="#d8e6f2" opacity="0.5"/><rect x="81.4" y="25" width="0.5" height="40" fill="#d8e6f2" opacity="0.5"/><rect x="58" y="27.0" width="26" height="0.4" fill="#3d5a7a" opacity="0.35"/><rect x="58" y="29.5" width="26" height="0.4" fill="#3d5a7a" opacity="0.35"/><rect x="58" y="32.0" width="26" height="0.4" fill="#3d5a7a" opacity="0.35"/><rect x="58" y="34.5" width="26" height="0.4" fill="#3d5a7a" opacity="0.35"/><rect x="58" y="37.0" width="26" height="0.4" fill="#3d5a7a" opacity="0.35"/><rect x="58" y="39.5" width="26" height="0.4" fill="#3d5a7a" opacity="0.35"/><rect x="58" y="42.0" width="26" height="0.4" fill="#3d5a7a" opacity="0.35"/><rect x="58" y="44.5" width="26" height="0.4" fill="#3d5a7a" opacity="0.35"/><rect x="58" y="47.0" width="26" height="0.4" fill="#3d5a7a" opacity="0.35"/><rect x="58" y="49.5" width="26" height="0.4" fill="#3d5a7a" opacity="0.35"/><rect x="58" y="52.0" width="26" height="0.4" fill="#3d5a7a" opacity="0.35"/><rect x="58" y="54.5" width="26" height="0.4" fill="#3d5a7a" opacity="0.35"/><rect x="58" y="57.0" width="26" height="0.4" fill="#3d5a7a" opacity="0.35"/><rect x="58" y="59.5" width="26" height="0.4" fill="#3d5a7a" opacity="0.35"/>
<rect x="59" y="23.5" width="25" height="1.6" fill="#f2eed8"/>
<rect x="58" y="52" width="26" height="19" fill="#34445a" opacity="0.6"/>
<path d="M99 26l13 -1l11 1.5V71H99z" fill="url(#b3)"/>
<rect x="99.0" y="26" width="0.5" height="40" fill="#e8f0f8" opacity="0.5"/><rect x="101.4" y="26" width="0.5" height="40" fill="#e8f0f8" opacity="0.5"/><rect x="103.8" y="26" width="0.5" height="40" fill="#e8f0f8" opacity="0.5"/><rect x="106.2" y="26" width="0.5" height="40" fill="#e8f0f8" opacity="0.5"/><rect x="108.6" y="26" width="0.5" height="40" fill="#e8f0f8" opacity="0.5"/><rect x="111.0" y="26" width="0.5" height="40" fill="#e8f0f8" opacity="0.5"/><rect x="113.4" y="26" width="0.5" height="40" fill="#e8f0f8" opacity="0.5"/><rect x="115.8" y="26" width="0.5" height="40" fill="#e8f0f8" opacity="0.5"/><rect x="118.2" y="26" width="0.5" height="40" fill="#e8f0f8" opacity="0.5"/><rect x="120.6" y="26" width="0.5" height="40" fill="#e8f0f8" opacity="0.5"/>
<rect x="100" y="24.5" width="22" height="1.6" fill="#f2eed8"/>
<path d="M112 31l9 1V71h-9z" fill="#7a9aba"/>
<rect x="100" y="52" width="23" height="19" fill="#566a7c" opacity="0.45"/>
<rect x="0" y="62" width="133" height="9" fill="#747a70"/>
<rect x="40" y="59" width="18" height="9" fill="#b8bfc2"/>
<rect x="84" y="60" width="15" height="8" fill="#cdd3d4"/>
<path d="M0 30c3-3 8-1 9 4c3 4 4 10 2 16c3 5 2 12-1 16l-10 3z" fill="#22381a"/>
<path d="M2 48c4-2 9 2 10 8c1 6-2 11-6 13H0z" fill="#2e4a22"/>
<path d="M124 0h9v20c-3 3-6 2-8-1c-3-2-5-6-3-10c-2-3-1-7 2-9z" fill="#3a5a28"/>
<path d="M126 20c2 1 4 3 3 6" stroke="#2a3a20" stroke-width="0.8" fill="none"/>
<ellipse cx="51" cy="61" rx="4" ry="4.5" fill="#2f4422"/>
<ellipse cx="94" cy="61" rx="5" ry="4.5" fill="#4a6a34"/>
<rect x="0" y="67" width="133" height="4" fill="#4e5046"/>
</g>
</svg></div>
<span class="t" id="t54" style="left:154.20px;top:133.75px;font-size:6.3px;color:#2b3a7a;font-weight:normal;font-family:'Liberation Sans';transform:scaleX(0.9787);transform-origin:0 0;">Нурахметова Алия Аскаровна</span>
<div class="a" style="left:154.2px;top:139.3px;width:86px;height:0.7px;background:#e87878;opacity:0.8"></div>
<span class="t" id="t55" style="left:154.20px;top:141.25px;font-size:6.3px;color:#a2305f;font-weight:normal;font-family:'Liberation Sans';transform:scaleX(0.9848);transform-origin:0 0;">Главный эксперт управления</span>
<span class="t" id="t56" style="left:265.80px;top:141.25px;font-size:6.3px;color:#a2305f;font-weight:normal;font-family:'Liberation Sans';transform:scaleX(1.0167);transform-origin:0 0;">авторского</span>
<span class="t" id="t57" style="left:154.20px;top:148.15px;font-size:6.3px;color:#a2305f;font-weight:normal;font-family:'Liberation Sans';transform:scaleX(0.9882);transform-origin:0 0;">права</span>
<span class="t" id="t58" style="left:275.80px;top:173.19px;font-size:6.6px;color:#222;font-weight:normal;font-family:'Liberation Sans';transform:scaleX(1.0157);transform-origin:0 0;">АСТАНА  2023</span>
</div>
<div class="a" style="left:10.8px;top:108.4px;width:137.3px;height:79.6px;background:#f1f1f1;"></div>
<div class="a" style="left:11.9px;top:109.5px;width:135.1px;height:77.4px;background:#f07452;"></div>
<div class="a" style="left:13.5px;top:111.1px;width:362px;height:204px;background:#fff;transform:scale(0.3655);transform-origin:0 0;overflow:hidden">
<span class="t" id="t59" style="left:292.50px;top:5.67px;font-size:11px;color:#3a3a3a;font-weight:bold;font-family:'Liberation Serif';transform:scaleX(0.8178);transform-origin:0 0;">QAZ</span>
<svg class="a" style="left:311px;top:3px;" width="13" height="13" viewBox="0 0 13 13"><circle cx="6.3" cy="7.8" r="4.6" fill="#3f9fb0"/><path d="M1.7000000000000002 7.8h9.2M6.3 3.2v9.2M2.39 5.73h7.819999999999999M2.39 9.87h7.819999999999999" stroke="#fff" stroke-width="0.5519999999999999"/><ellipse cx="6.3" cy="7.8" rx="2.07" ry="4.6" fill="none" stroke="#fff" stroke-width="0.5519999999999999"/><path d="M3.77 2.9699999999999998l0.69 -2.76l0.9199999999999999 1.8399999999999999l0.9199999999999999 -2.3l0.9199999999999999 2.3l0.9199999999999999 -1.8399999999999999l0.69 2.76z" fill="#3f9fb0"/></svg>
<span class="t" id="t60" style="left:323.00px;top:5.67px;font-size:11px;color:#3a3a3a;font-weight:bold;font-family:'Liberation Serif';transform:scaleX(0.8372);transform-origin:0 0;">PATENT</span>
<span class="t" id="t61" style="left:70.90px;top:26.70px;font-size:16px;color:#3573c0;font-weight:bold;font-family:'Liberation Sans';transform:scaleX(0.9677);transform-origin:0 0;">НАЦИОНАЛЬНЫЙ ИНСТИТУТ</span>
<span class="t" id="t62" style="left:25.40px;top:44.24px;font-size:15.6px;color:#3573c0;font-weight:bold;font-family:'Liberation Sans';transform:scaleX(0.9836);transform-origin:0 0;">ИНТЕЛЛЕКТУАЛЬНОЙ СОБСТВЕННОСТИ</span>
<span class="t" id="t63" style="left:74.00px;top:62.42px;font-size:14.8px;color:#3573c0;font-weight:normal;font-family:'Liberation Sans';transform:scaleX(1.0455);transform-origin:0 0;">Регистрация авторского права на</span>
<span class="t" id="t64" style="left:82.20px;top:78.42px;font-size:14.8px;color:#3573c0;font-weight:normal;font-family:'Liberation Sans';transform:scaleX(1.0344);transform-origin:0 0;">собственное  произведение</span>
<div class="a" style="left:14px;top:111.4px;width:133px;height:71px;overflow:hidden"><svg class="a" style="left:0;top:0" width="133" height="71" viewBox="0 0 133 71" preserveAspectRatio="none">
<defs>
<filter id="cb" x="-2%" y="-2%" width="104%" height="104%"><feGaussianBlur stdDeviation="0.45"/></filter>
<linearGradient id="sky" x1="0" y1="0" x2="0" y2="1"><stop offset="0" stop-color="#44699a"/><stop offset="0.5" stop-color="#7c9fc4"/><stop offset="1" stop-color="#c4d6e6"/></linearGradient>
<linearGradient id="b1l" x1="0" y1="0" x2="1" y2="0"><stop offset="0" stop-color="#aabccc"/><stop offset="0.4" stop-color="#dde6ee"/><stop offset="1" stop-color="#8aa2ba"/></linearGradient>
<linearGradient id="b1r" x1="0" y1="0" x2="0" y2="1"><stop offset="0" stop-color="#6484a4"/><stop offset="0.5" stop-color="#44607e"/><stop offset="1" stop-color="#2e3e50"/></linearGradient>
<linearGradient id="b2" x1="0" y1="0" x2="1" y2="0"><stop offset="0" stop-color="#6a8eb6"/><stop offset="0.55" stop-color="#94b4d4"/><stop offset="1" stop-color="#4a6a90"/></linearGradient>
<linearGradient id="b3" x1="0" y1="0" x2="1" y2="0"><stop offset="0" stop-color="#9cbad6"/><stop offset="1" stop-color="#6f92b6"/></linearGradient>
</defs>
<g filter="url(#cb)">
<rect width="133" height="71" fill="url(#sky)"/>
<path d="M12 7.5l15 -1.5l1 1l13 3.5V71H12z" fill="url(#b1l)"/>
<rect x="12.0" y="8" width="0.6" height="60" fill="#ffffff" opacity="0.35"/><rect x="14.2" y="8" width="0.6" height="60" fill="#ffffff" opacity="0.35"/><rect x="16.4" y="8" width="0.6" height="60" fill="#ffffff" opacity="0.35"/><rect x="18.6" y="8" width="0.6" height="60" fill="#ffffff" opacity="0.35"/><rect x="20.8" y="8" width="0.6" height="60" fill="#ffffff" opacity="0.35"/><rect x="23.0" y="8" width="0.6" height="60" fill="#ffffff" opacity="0.35"/><rect x="25.2" y="8" width="0.6" height="60" fill="#ffffff" opacity="0.35"/>
<path d="M27 6.5L41 10.5V71H27z" fill="url(#b1r)"/>
<rect x="13" y="6.5" width="14" height="1.5" fill="#f4f0d8"/>
<rect x="14" y="48" width="27" height="23" fill="#4e5e70" opacity="0.55"/>
<path d="M58 25l13 -1.5l13 2V71H58z" fill="url(#b2)"/>
<rect x="58.0" y="25" width="0.5" height="40" fill="#d8e6f2" opacity="0.5"/><rect x="60.6" y="25" width="0.5" height="40" fill="#d8e6f2" opacity="0.5"/><rect x="63.2" y="25" width="0.5" height="40" fill="#d8e6f2" opacity="0.5"/><rect x="65.8" y="25" width="0.5" height="40" fill="#d8e6f2" opacity="0.5"/><rect x="68.4" y="25" width="0.5" height="40" fill="#d8e6f2" opacity="0.5"/><rect x="71.0" y="25" width="0.5" height="40" fill="#d8e6f2" opacity="0.5"/><rect x="73.6" y="25" width="0.5" height="40" fill="#d8e6f2" opacity="0.5"/><rect x="76.2" y="25" width="0.5" height="40" fill="#d8e6f2" opacity="0.5"/><rect x="78.8" y="25" width="0.5" height="40" fill="#d8e6f2" opacity="0.5"/><rect x="81.4" y="25" width="0.5" height="40" fill="#d8e6f2" opacity="0.5"/><rect x="58" y="27.0" width="26" height="0.4" fill="#3d5a7a" opacity="0.35"/><rect x="58" y="29.5" width="26" height="0.4" fill="#3d5a7a" opacity="0.35"/><rect x="58" y="32.0" width="26" height="0.4" fill="#3d5a7a" opacity="0.35"/><rect x="58" y="34.5" width="26" height="0.4" fill="#3d5a7a" opacity="0.35"/><rect x="58" y="37.0" width="26" height="0.4" fill="#3d5a7a" opacity="0.35"/><rect x="58" y="39.5" width="26" height="0.4" fill="#3d5a7a" opacity="0.35"/><rect x="58" y="42.0" width="26" height="0.4" fill="#3d5a7a" opacity="0.35"/><rect x="58" y="44.5" width="26" height="0.4" fill="#3d5a7a" opacity="0.35"/><rect x="58" y="47.0" width="26" height="0.4" fill="#3d5a7a" opacity="0.35"/><rect x="58" y="49.5" width="26" height="0.4" fill="#3d5a7a" opacity="0.35"/><rect x="58" y="52.0" width="26" height="0.4" fill="#3d5a7a" opacity="0.35"/><rect x="58" y="54.5" width="26" height="0.4" fill="#3d5a7a" opacity="0.35"/><rect x="58" y="57.0" width="26" height="0.4" fill="#3d5a7a" opacity="0.35"/><rect x="58" y="59.5" width="26" height="0.4" fill="#3d5a7a" opacity="0.35"/>
<rect x="59" y="23.5" width="25" height="1.6" fill="#f2eed8"/>
<rect x="58" y="52" width="26" height="19" fill="#34445a" opacity="0.6"/>
<path d="M99 26l13 -1l11 1.5V71H99z" fill="url(#b3)"/>
<rect x="99.0" y="26" width="0.5" height="40" fill="#e8f0f8" opacity="0.5"/><rect x="101.4" y="26" width="0.5" height="40" fill="#e8f0f8" opacity="0.5"/><rect x="103.8" y="26" width="0.5" height="40" fill="#e8f0f8" opacity="0.5"/><rect x="106.2" y="26" width="0.5" height="40" fill="#e8f0f8" opacity="0.5"/><rect x="108.6" y="26" width="0.5" height="40" fill="#e8f0f8" opacity="0.5"/><rect x="111.0" y="26" width="0.5" height="40" fill="#e8f0f8" opacity="0.5"/><rect x="113.4" y="26" width="0.5" height="40" fill="#e8f0f8" opacity="0.5"/><rect x="115.8" y="26" width="0.5" height="40" fill="#e8f0f8" opacity="0.5"/><rect x="118.2" y="26" width="0.5" height="40" fill="#e8f0f8" opacity="0.5"/><rect x="120.6" y="26" width="0.5" height="40" fill="#e8f0f8" opacity="0.5"/>
<rect x="100" y="24.5" width="22" height="1.6" fill="#f2eed8"/>
<path d="M112 31l9 1V71h-9z" fill="#7a9aba"/>
<rect x="100" y="52" width="23" height="19" fill="#566a7c" opacity="0.45"/>
<rect x="0" y="62" width="133" height="9" fill="#747a70"/>
<rect x="40" y="59" width="18" height="9" fill="#b8bfc2"/>
<rect x="84" y="60" width="15" height="8" fill="#cdd3d4"/>
<path d="M0 30c3-3 8-1 9 4c3 4 4 10 2 16c3 5 2 12-1 16l-10 3z" fill="#22381a"/>
<path d="M2 48c4-2 9 2 10 8c1 6-2 11-6 13H0z" fill="#2e4a22"/>
<path d="M124 0h9v20c-3 3-6 2-8-1c-3-2-5-6-3-10c-2-3-1-7 2-9z" fill="#3a5a28"/>
<path d="M126 20c2 1 4 3 3 6" stroke="#2a3a20" stroke-width="0.8" fill="none"/>
<ellipse cx="51" cy="61" rx="4" ry="4.5" fill="#2f4422"/>
<ellipse cx="94" cy="61" rx="5" ry="4.5" fill="#4a6a34"/>
<rect x="0" y="67" width="133" height="4" fill="#4e5046"/>
</g>
</svg></div>
<span class="t" id="t65" style="left:154.20px;top:132.95px;font-size:6.3px;color:#2b3a7a;font-weight:bold;font-family:'Liberation Sans';transform:scaleX(0.9137);transform-origin:0 0;">Нурахметова Алия Аскаровна</span>
<div class="a" style="left:154.2px;top:139.3px;width:86px;height:0.7px;background:#e87878;opacity:0.8"></div>
<span class="t" id="t66" style="left:154.20px;top:140.45px;font-size:6.3px;color:#a2305f;font-weight:bold;font-family:'Liberation Sans';transform:scaleX(0.9072);transform-origin:0 0;">Главный эксперт управления</span>
<span class="t" id="t67" style="left:265.80px;top:140.45px;font-size:6.3px;color:#a2305f;font-weight:bold;font-family:'Liberation Sans';transform:scaleX(0.9254);transform-origin:0 0;">авторского</span>
<span class="t" id="t68" style="left:154.20px;top:147.34px;font-size:6.3px;color:#a2305f;font-weight:bold;font-family:'Liberation Sans';transform:scaleX(0.9213);transform-origin:0 0;">права</span>
<span class="t" id="t69" style="left:275.80px;top:171.62px;font-size:7.5px;color:#222;font-weight:normal;font-family:'Liberation Sans';transform:scaleX(0.8928);transform-origin:0 0;">АСТАНА  2023</span>
</div>
<div class="a" style="left:12.5px;top:193.2px;width:134.3px;height:74.5px;background:#fff;"></div>
<svg class="a" style="left:120px;top:196px;" width="25" height="6" viewBox="0 0 25 6"><text x="0" y="4.5" font-size="4.2" font-family="Liberation Serif" fill="#555">QAZ</text><circle cx="10.8" cy="3" r="1.8" fill="#3f9fb0"/><path d="M9.0 3h3.6M10.8 1.2v3.6M9.270000000000001 2.19h3.06M9.270000000000001 3.81h3.06" stroke="#fff" stroke-width="0.216"/><ellipse cx="10.8" cy="3" rx="0.81" ry="1.8" fill="none" stroke="#fff" stroke-width="0.216"/><path d="M9.81 1.1099999999999999l0.27 -1.08l0.36000000000000004 0.7200000000000001l0.36000000000000004 -0.9l0.36000000000000004 0.9l0.36000000000000004 -0.7200000000000001l0.27 1.08z" fill="#3f9fb0"/><text x="12.8" y="4.5" font-size="4.2" font-family="Liberation Serif" fill="#555">PATENT</text></svg>
<span class="t" id="t70" style="left:23.70px;top:205.34px;font-size:5.6px;color:#4a6226;font-weight:bold;font-family:'Liberation Sans';transform:scaleX(0.9316);transform-origin:0 0;-webkit-text-stroke:0.25px #4a6226;">Возникновение Авторского права.</span>
<span class="t" id="t71" style="left:23.70px;top:210.64px;font-size:5.6px;color:#4a6226;font-weight:bold;font-family:'Liberation Sans';transform:scaleX(0.8894);transform-origin:0 0;-webkit-text-stroke:0.25px #4a6226;">Презумпция авторства</span>
<span class="t" id="t72" style="left:24.50px;top:219.08px;font-size:3.2px;color:#1e1e1e;font-weight:normal;font-family:'Liberation Sans';transform:scaleX(1.1680);transform-origin:0 0;">• Авторское право на произведения науки, литературы и искусства</span>
<span class="t" id="t73" style="left:26.00px;top:222.38px;font-size:3.2px;color:#1e1e1e;font-weight:normal;font-family:'Liberation Sans';transform:scaleX(1.0372);transform-origin:0 0;">возникает в силу факта его создания.</span>
<span class="t" id="t74" style="left:24.50px;top:226.08px;font-size:3.2px;color:#1e1e1e;font-weight:normal;font-family:'Liberation Sans';transform:scaleX(1.1555);transform-origin:0 0;">• Для оповещения о своих исключительных имущественных правах</span>
<span class="t" id="t75" style="left:26.00px;top:229.38px;font-size:3.2px;color:#1e1e1e;font-weight:normal;font-family:'Liberation Sans';transform:scaleX(1.1683);transform-origin:0 0;">автор и (или) правообладатель вправе использовать знак охраны</span>
<span class="t" id="t76" style="left:26.00px;top:232.68px;font-size:3.2px;color:#1e1e1e;font-weight:normal;font-family:'Liberation Sans';transform:scaleX(1.2205);transform-origin:0 0;">авторского права, который помещается на каждом экземпляре</span>
<span class="t" id="t77" style="left:26.00px;top:235.98px;font-size:3.2px;color:#1e1e1e;font-weight:normal;font-family:'Liberation Sans';transform:scaleX(1.1384);transform-origin:0 0;">произведения и обязательно состоит из трех элементов:</span>
<span class="t" id="t78" style="left:23.50px;top:241.08px;font-size:3.2px;color:#1e1e1e;font-weight:normal;font-family:'Liberation Sans';transform:scaleX(1.1357);transform-origin:0 0;">✤ латинской буквы "C" в окружности</span>
<span class="t" id="t79" style="left:23.50px;top:245.28px;font-size:3.2px;color:#1e1e1e;font-weight:normal;font-family:'Liberation Sans';transform:scaleX(1.0732);transform-origin:0 0;">✤ имени (наименования) обладателя</span>
<span class="t" id="t80" style="left:23.50px;top:249.48px;font-size:3.2px;color:#1e1e1e;font-weight:normal;font-family:'Liberation Sans';transform:scaleX(1.1808);transform-origin:0 0;">   исключительных авторских прав</span>
<span class="t" id="t81" style="left:23.50px;top:253.68px;font-size:3.2px;color:#1e1e1e;font-weight:normal;font-family:'Liberation Sans';transform:scaleX(1.1526);transform-origin:0 0;">✤ года первого опубликования произведения</span>
<div class="a" style="left:12.5px;top:276.9px;width:134.3px;height:60px;background:#fff;"></div>
<svg class="a" style="left:120px;top:279.5px;" width="25" height="6" viewBox="0 0 25 6"><text x="0" y="4.5" font-size="4.2" font-family="Liberation Serif" fill="#555">QAZ</text><circle cx="10.8" cy="3" r="1.8" fill="#3f9fb0"/><path d="M9.0 3h3.6M10.8 1.2v3.6M9.270000000000001 2.19h3.06M9.270000000000001 3.81h3.06" stroke="#fff" stroke-width="0.216"/><ellipse cx="10.8" cy="3" rx="0.81" ry="1.8" fill="none" stroke="#fff" stroke-width="0.216"/><path d="M9.81 1.1099999999999999l0.27 -1.08l0.36000000000000004 0.7200000000000001l0.36000000000000004 -0.9l0.36000000000000004 0.9l0.36000000000000004 -0.7200000000000001l0.27 1.08z" fill="#3f9fb0"/><text x="12.8" y="4.5" font-size="4.2" font-family="Liberation Serif" fill="#555">PATENT</text></svg>
<span class="t" id="t82" style="left:23.60px;top:288.90px;font-size:6px;color:#7d3d12;font-weight:bold;font-family:'Liberation Sans';transform:scaleX(1.0406);transform-origin:0 0;-webkit-text-stroke:0.25px #7d3d12;">Произведения, являющиеся</span>
<span class="t" id="t83" style="left:23.60px;top:294.30px;font-size:6px;color:#7d3d12;font-weight:bold;font-family:'Liberation Sans';transform:scaleX(1.0339);transform-origin:0 0;-webkit-text-stroke:0.25px #7d3d12;">объектами авторского права</span>
<span class="t" id="t84" style="left:24.00px;top:301.38px;font-size:3.2px;color:#1e1e1e;font-weight:normal;font-family:'Liberation Sans';transform:scaleX(0.9631);transform-origin:0 0;">• Книги, журналы, статьи, рукописи, письма</span>
<span class="t" id="t85" style="left:24.00px;top:305.48px;font-size:3.2px;color:#1e1e1e;font-weight:normal;font-family:'Liberation Sans';transform:scaleX(1.0220);transform-origin:0 0;">• Программы обеспечения</span>
<span class="t" id="t86" style="left:24.00px;top:309.58px;font-size:3.2px;color:#1e1e1e;font-weight:normal;font-family:'Liberation Sans';transform:scaleX(1.1619);transform-origin:0 0;">• Базы данных</span>
<span class="t" id="t87" style="left:24.00px;top:313.68px;font-size:3.2px;color:#1e1e1e;font-weight:normal;font-family:'Liberation Sans';transform:scaleX(0.9430);transform-origin:0 0;">• Художественные произведения</span>
<span class="t" id="t88" style="left:24.00px;top:317.78px;font-size:3.2px;color:#1e1e1e;font-weight:normal;font-family:'Liberation Sans';transform:scaleX(1.1376);transform-origin:0 0;">• Фотографии</span>
<span class="t" id="t89" style="left:24.00px;top:321.88px;font-size:3.2px;color:#1e1e1e;font-weight:normal;font-family:'Liberation Sans';transform:scaleX(1.2800);transform-origin:0 0;">• Музыка</span>
<span class="t" id="t90" style="left:24.00px;top:325.98px;font-size:3.2px;color:#1e1e1e;font-weight:normal;font-family:'Liberation Sans';transform:scaleX(0.9209);transform-origin:0 0;">• Театр, телевидение, фильмы, и хореография</span>
<span class="t" id="t91" style="left:24.00px;top:330.08px;font-size:3.2px;color:#1e1e1e;font-weight:normal;font-family:'Liberation Sans';transform:scaleX(1.0026);transform-origin:0 0;">• Графические изображения</span>
<svg class="a" style="left:95px;top:301px;" width="19" height="14" viewBox="0 0 19 14"><rect x="0.5" y="4.5" width="7" height="8" fill="#e8b030"/><rect x="0.5" y="7" width="7" height="2" fill="#c04a3a"/><rect x="0.5" y="10" width="7" height="1.5" fill="#3a7ac0"/><rect x="8" y="1" width="3" height="12" fill="#6aa040"/><rect x="11" y="0.5" width="3" height="12.5" fill="#a04a9a"/><rect x="14" y="2" width="3" height="11" fill="#e0c040"/></svg>
<svg class="a" style="left:119px;top:302px;" width="18" height="12" viewBox="0 0 18 12"><ellipse cx="9" cy="6.5" rx="8.5" ry="4.5" fill="#3fc030"/><path d="M4 3l6 2 4-3 1 6-6 3-5-3z" fill="#222"/><path d="M6 4l3 1v4l-3-1z" fill="#e8e8e8"/><circle cx="12" cy="5" r="1.5" fill="#d04040"/></svg>
<svg class="a" style="left:98px;top:317px;" width="18" height="15" viewBox="0 0 18 15"><rect x="0.5" y="0.5" width="17" height="14" fill="#cfe6f2"/><path d="M2 14V6l4-4 3 4v8z" fill="#2a6aa0"/><path d="M9 14V4h6v10z" fill="#6ab0d8"/><path d="M4 9h10" stroke="#222" stroke-width="0.6"/><rect x="12" y="2" width="3" height="4" fill="#e0e050"/></svg>
<svg class="a" style="left:124px;top:317px;" width="14" height="15" viewBox="0 0 14 15"><path d="M2 13l3-9 6-2 1 5-4 6z" fill="#3a3aa0"/><path d="M5 5l5 1-2 5-4-1z" fill="#e8e8e8"/><circle cx="9" cy="3" r="1.6" fill="#e0c040"/><path d="M1 8l3 1M10 10l3 2" stroke="#d04070" stroke-width="1"/></svg>
<span class="t" id="t92" style="left:7.80px;top:109.90px;font-size:6.0px;color:#e8764f;font-weight:normal;font-family:'Liberation Sans';transform:scaleX(0.6579);transform-origin:0 0;">1</span>
<span class="t" id="t93" style="left:7.80px;top:194.13px;font-size:6.2px;color:#666;font-weight:normal;font-family:'Liberation Sans';transform:scaleX(1.0425);transform-origin:0 0;">2</span>
<span class="t" id="t94" style="left:7.80px;top:277.73px;font-size:6.2px;color:#666;font-weight:normal;font-family:'Liberation Sans';transform:scaleX(1.0425);transform-origin:0 0;">3</span>
<div class="a" style="left:2px;top:332px;width:563px;height:9px;background:#f0f0f0;"></div>
<span class="t" id="t95" style="left:5.00px;top:334.68px;font-size:5.2px;color:#6a6a6a;font-weight:normal;font-family:'Liberation Sans';transform:scaleX(0.8569);transform-origin:0 0;">Слайд 1 из 23</span>
<svg class="a" style="left:42.5px;top:333.5px;" width="6" height="6" viewBox="0 0 6 6"><rect x="0.4" y="0.4" width="4.2" height="4" fill="none" stroke="#777" stroke-width="0.5"/><path d="M2.5 5.5l1 -1.5h2" fill="none" stroke="#777" stroke-width="0.5"/></svg>
<span class="t" id="t96" style="left:55.00px;top:334.68px;font-size:5.2px;color:#6a6a6a;font-weight:normal;font-family:'Liberation Sans';transform:scaleX(0.9557);transform-origin:0 0;">русский</span>
<svg class="a" style="left:344.5px;top:333.5px;" width="5" height="6" viewBox="0 0 5 6"><path d="M1 5h3M1.5 3.5h2M2.5 0.5v3" stroke="#777" stroke-width="0.6"/></svg>
<span class="t" id="t97" style="left:351.00px;top:334.68px;font-size:5.2px;color:#6a6a6a;font-weight:normal;font-family:'Liberation Sans';transform:scaleX(0.9474);transform-origin:0 0;">Заметки</span>
<svg class="a" style="left:378px;top:333.8px;" width="5" height="5" viewBox="0 0 5 5"><path d="M0.3 0.3h4.2v3H2.2L1 4.6V3.3H0.3z" fill="#666"/></svg>
<span class="t" id="t98" style="left:385.00px;top:334.68px;font-size:5.2px;color:#6a6a6a;font-weight:normal;font-family:'Liberation Sans';transform:scaleX(0.9515);transform-origin:0 0;">Примечания</span>
<div class="a" style="left:421px;top:332px;width:15.5px;height:9px;background:#d2d2d2;"></div>
<svg class="a" style="left:425.5px;top:333.5px;" width="6" height="6" viewBox="0 0 6 6"><rect x="0.4" y="0.4" width="5" height="5" fill="none" stroke="#666" stroke-width="0.6"/><rect x="1.6" y="2" width="2.6" height="2" fill="#888"/></svg>
<svg class="a" style="left:441.5px;top:333.5px;" width="7" height="6" viewBox="0 0 7 6"><rect x="0.3" y="0.3" width="2.6" height="2.2" fill="none" stroke="#888" stroke-width="0.5"/><rect x="3.8" y="0.3" width="2.6" height="2.2" fill="none" stroke="#888" stroke-width="0.5"/><rect x="0.3" y="3.3" width="2.6" height="2.2" fill="none" stroke="#888" stroke-width="0.5"/><rect x="3.8" y="3.3" width="2.6" height="2.2" fill="none" stroke="#888" stroke-width="0.5"/></svg>
<svg class="a" style="left:457.5px;top:333.5px;" width="6.5" height="6" viewBox="0 0 6.5 6"><path d="M0.4 1h2.6v4.4H0.4zM3.4 1h2.6v4.4H3.4z" fill="none" stroke="#888" stroke-width="0.5"/><path d="M1 2.2h1.5M1 3.3h1.5M4 2.2h1.5M4 3.3h1.5" stroke="#aaa" stroke-width="0.4"/></svg>
<svg class="a" style="left:472.5px;top:333.5px;" width="6" height="6" viewBox="0 0 6 6"><path d="M0.3 0.6h5.4M1 0.6v2.6h4V0.6M3 3.2v1.5M2 5.3l1-0.6 1 0.6" fill="none" stroke="#777" stroke-width="0.6"/></svg>
<div class="a" style="left:486.5px;top:336.5px;width:2px;height:0.7px;background:#555;"></div>
<div class="a" style="left:490.5px;top:336.7px;width:40px;height:0.5px;background:#aaa;"></div>
<div class="a" style="left:502.5px;top:334px;width:1.4px;height:5px;background:#555;"></div>
<div class="a" style="left:513.5px;top:335.8px;width:0.4px;height:2px;background:#aaa;"></div>
<div class="a" style="left:533.5px;top:336.5px;width:3px;height:0.7px;background:#555;"></div>
<div class="a" style="left:534.65px;top:335.0px;width:0.7px;height:3.7px;background:#555;"></div>
<span class="t" id="t99" style="left:542.30px;top:334.68px;font-size:5.2px;color:#6a6a6a;font-weight:normal;font-family:'Liberation Sans';transform:scaleX(0.8662);transform-origin:0 0;">69%</span>
<svg class="a" style="left:556.5px;top:334.2px;" width="6" height="6" viewBox="0 0 6 6"><rect x="0.3" y="0.3" width="5.2" height="5.2" fill="none" stroke="#888" stroke-width="0.5"/><path d="M1.2 1.2l1 1M4.6 1.2l-1 1M1.2 4.6l1-1M4.6 4.6l-1-1" stroke="#777" stroke-width="0.5"/></svg>
<div class="a" style="left:2px;top:341px;width:563px;height:16px;background:#111111;"></div>
<svg class="a" style="left:8px;top:346px;" width="7.5" height="6.5" viewBox="0 0 7.5 6.5"><path d="M0 0.9L3.1 0.5V3.1H0zM3.6 0.4L7.4 0V3.1H3.6zM0 3.5H3.1V6L0 5.6zM3.6 3.5H7.4V6.6L3.6 6.1z" fill="#fff"/></svg>
<div class="a" style="left:22px;top:341px;width:141.7px;height:16px;background:#f0f0f0;"></div>
<svg class="a" style="left:27.5px;top:345.8px;" width="6" height="7" viewBox="0 0 6 7"><circle cx="3.7" cy="2.3" r="1.8" fill="none" stroke="#333" stroke-width="0.6"/><path d="M2.4 3.7L0.5 6" stroke="#333" stroke-width="0.7"/></svg>
<span class="t" id="t100" style="left:39.20px;top:346.69px;font-size:6.6px;color:#5a5a5a;font-weight:normal;font-family:'Liberation Sans';transform:scaleX(0.9354);transform-origin:0 0;">Поиск</span>
<svg class="a" style="left:169.6px;top:345.5px;" width="8" height="7" viewBox="0 0 8 7"><path d="M0.2 0.6h5.6M0.2 6.2h5.6" stroke="#cfcfcf" stroke-width="1"/><path d="M0.9 0.6v5.6M5.1 0.6v5.6" stroke="#cfcfcf" stroke-width="1.2"/><path d="M7.2 0.5v6" stroke="#bbb" stroke-width="0.7"/><circle cx="7.2" cy="2.8" r="0.6" fill="#eee"/></svg>
<svg class="a" style="left:190.2px;top:345px;" width="9.5" height="8.5" viewBox="0 0 9.5 8.5"><path d="M8.8 4.8H2.3c0.3 1.9 1.8 2.9 3.6 2.9 1.1 0 2.1-0.3 2.9-0.9v1.1c-0.9 0.5-1.9 0.7-3.1 0.7C2.4 8.6 0.4 6.6 0.4 4.3 0.4 1.9 2.4 0 5 0c2.4 0 3.8 1.7 3.8 4v0.8zM2.4 3.4h4.4C6.7 2 6 1.2 4.7 1.2 3.5 1.2 2.6 2.1 2.4 3.4z" fill="#1a8ae0"/></svg>
<svg class="a" style="left:210.9px;top:345px;" width="7.5" height="8.5" viewBox="0 0 7.5 8.5"><path d="M0.3 0.3h4.8l2.2 2.2V8.2H0.3z" fill="#f4f4f4"/><path d="M5 0.3v2.3h2.3" fill="#cfcfcf"/></svg>
<div class="a" style="left:206.3px;top:356px;width:16.5px;height:0.9px;background:#7394b4;"></div>
<svg class="a" style="left:229.9px;top:345px;" width="9.6" height="8.5" viewBox="0 0 9.6 8.5"><path d="M0.4 2.6h8.8V8.2H0.4z" fill="#f4f4f4"/><path d="M3 2.6V1.4a1.8 1.3 0 0 1 3.6 0V2.6" fill="none" stroke="#f4f4f4" stroke-width="0.6"/><rect x="3" y="4" width="1.6" height="1.6" fill="#f25022"/><rect x="4.9" y="4" width="1.6" height="1.6" fill="#7fba00"/><rect x="3" y="5.9" width="1.6" height="1.6" fill="#00a4ef"/><rect x="4.9" y="5.9" width="1.6" height="1.6" fill="#ffb900"/></svg>
<svg class="a" style="left:249.9px;top:346px;" width="11" height="7" viewBox="0 0 11 7"><rect x="0.2" y="0.2" width="10.6" height="6.6" fill="#1e90e8"/><path d="M0.2 0.4l5.3 3.4 5.3-3.4" fill="none" stroke="#cfe8fb" stroke-width="0.7"/></svg>
<svg class="a" style="left:271.7px;top:345px;" width="7.5" height="8.5" viewBox="0 0 7.5 8.5"><path d="M0.3 0.3h4.8l2.2 2.2V8.2H0.3z" fill="#f4f4f4"/><path d="M5 0.3v2.3h2.3" fill="#cfcfcf"/></svg>
<div class="a" style="left:267px;top:356px;width:16px;height:0.9px;background:#7394b4;"></div>
<div class="a" style="left:285.4px;top:341px;width:19.5px;height:16px;background:#3a3a3a;"></div>
<svg class="a" style="left:290px;top:345px;" width="10.5" height="8.5" viewBox="0 0 10.5 8.5"><rect x="2.5" y="0.3" width="7.7" height="7.9" rx="0.5" fill="#ed6c47"/><rect x="0.2" y="1.5" width="6" height="5.6" fill="#c43e1c"/><text x="1.3" y="6.2" font-size="5" font-family="Liberation Sans" font-weight="bold" fill="#fff">P</text></svg>
<div class="a" style="left:285.4px;top:356px;width:19.5px;height:0.9px;background:#8aa4bc;"></div>
<svg class="a" style="left:310.6px;top:344.8px;" width="10.5" height="9" viewBox="0 0 10.5 9"><circle cx="5.2" cy="4.5" r="4.4" fill="#2d8cff"/><path d="M3.2 2.9h4L3.3 6.1h4" stroke="#fff" stroke-width="1" fill="none"/></svg>
<div class="a" style="left:307.2px;top:356px;width:16.5px;height:0.9px;background:#7394b4;"></div>
<div class="a" style="left:562.3px;top:341px;width:0.6px;height:16px;background:#444;"></div>
<svg class="a" style="left:455px;top:346.5px;" width="5" height="3" viewBox="0 0 5 3"><path d="M0.4 2.6L2.4 0.6 4.4 2.6" fill="none" stroke="#ddd" stroke-width="0.6"/></svg>
<svg class="a" style="left:464px;top:345.5px;" width="5" height="7" viewBox="0 0 5 7"><rect x="1.3" y="0.3" width="2.4" height="4" rx="1.2" fill="#eee"/><path d="M0.5 3.5a2 2 0 0 0 4 0M2.5 5.5v1.2" fill="none" stroke="#eee" stroke-width="0.5"/></svg>
<svg class="a" style="left:473px;top:346px;" width="8" height="5" viewBox="0 0 8 5"><rect x="0.3" y="1" width="6.2" height="3.2" fill="#ddd"/><rect x="6.5" y="2" width="1" height="1.2" fill="#ddd"/></svg>
<svg class="a" style="left:482.5px;top:345.5px;" width="8" height="7" viewBox="0 0 8 7"><rect x="1.5" y="0.4" width="6" height="4" fill="none" stroke="#ddd" stroke-width="0.6"/><path d="M4.5 4.5v1.5M3 6.2h3M0.4 2.4h2" stroke="#ddd" stroke-width="0.6"/></svg>
<svg class="a" style="left:492px;top:345.5px;" width="7" height="7" viewBox="0 0 7 7"><path d="M0.4 2.2h1.6L4 0.4v6.2L2 4.8H0.4z" fill="none" stroke="#ddd" stroke-width="0.6"/><path d="M5 2a2 2 0 0 1 0 3M6 1a3.2 3.2 0 0 1 0 5" fill="none" stroke="#ddd" stroke-width="0.5"/></svg>
<span class="t" id="t101" style="left:503.00px;top:347.55px;font-size:5px;color:#e0e0e0;font-weight:normal;font-family:'Liberation Sans';transform:scaleX(0.9222);transform-origin:0 0;">ENG</span>
<span class="t" id="t102" style="left:525.00px;top:343.85px;font-size:5px;color:#e0e0e0;font-weight:normal;font-family:'Liberation Sans';transform:scaleX(0.7191);transform-origin:0 0;">7:43</span>
<span class="t" id="t103" style="left:518.00px;top:350.85px;font-size:5px;color:#e0e0e0;font-weight:normal;font-family:'Liberation Sans';transform:scaleX(0.8789);transform-origin:0 0;">18.10.2023</span>
<svg class="a" style="left:547.5px;top:344.5px;" width="11" height="10" viewBox="0 0 11 10"><path d="M0.4 0.4h8v5.5H3.5L1.8 7.6V5.9H0.4z" fill="#eee"/><circle cx="7.8" cy="6.6" r="2.6" fill="#111" stroke="#eee" stroke-width="0.5"/><text x="6.9" y="8.3" font-size="3.8" fill="#eee" font-family="Liberation Sans">1</text></svg>
<svg class="a" style="left:578.3px;top:46.8px" width="133" height="74.6" viewBox="0 0 133 74" preserveAspectRatio="none">
<defs><filter id="bl1" x="-5%" y="-5%" width="110%" height="110%"><feGaussianBlur stdDeviation="1.1"/></filter>
<linearGradient id="ceil" x1="0" y1="0" x2="0.3" y2="1"><stop offset="0" stop-color="#a9adb3"/><stop offset="0.6" stop-color="#d5d8dc"/><stop offset="1" stop-color="#e6e9ec"/></linearGradient></defs>
<g filter="url(#bl1)">
<rect width="133" height="74" fill="#e6e9ec"/>
<path d="M0 0H133V14L108 22L70 30L30 26L0 18z" fill="url(#ceil)"/><path d="M30 14L133 6V10L108 18L30 20z" fill="#f4f6f8"/>
<path d="M66 18L108 16L120 10V22L100 34L70 36L40 30z" fill="#f3f5f7"/>
<ellipse cx="84" cy="26" rx="5" ry="2" fill="#ffffff"/><ellipse cx="70" cy="31" rx="4" ry="1.6" fill="#fff"/>
<path d="M18 3a7.5 3.5 0 0 0 15 0" fill="#f2f4f6" stroke="#c4c8cc" stroke-width="0.5"/>
<rect x="26" y="9" width="2" height="11" fill="#fbfbfb"/>
<path d="M0 19L25 26V57L0 57z" fill="#bab6be"/>
<path d="M2 20v37M5.5 21v36M9 22v35M12.5 23v34M16 24v33M19.5 25v32M23 25.5v31" stroke="#9c99a0" stroke-width="1.1"/>
<rect x="25" y="25" width="4" height="35" fill="#eef0f2"/>
<rect x="29" y="30" width="4" height="3.5" fill="#2a2a2a"/>
<path d="M33 30L62 34V57L33 57z" fill="#aca9b0"/>
<path d="M36 31v26M40 31.5v25.5M44 32v25M48 32.5v24.5M52 33v24M56 33.5v23.5M60 34v23" stroke="#94919a" stroke-width="1"/>
<path d="M62 34L69 35V56H62z" fill="#e3e5e8"/>
<path d="M69 36L108 35V55H69z" fill="#dfe2df"/>
<path d="M73 42h12v12H73z" fill="#c9d2c6"/>
<circle cx="92" cy="45.5" r="3.2" fill="#2f6ec8"/><path d="M92 42.3a3.2 3.2 0 0 1 3.2 3.2H92z" fill="#e8d020"/>
<path d="M100 40h8v14h-8z" fill="#cfd6cc"/>
<path d="M108 22L133 12V74H112L108 60z" fill="#eceef0"/>
<rect x="117" y="20" width="4.5" height="6" fill="#1e1e1e"/>
<rect x="114" y="34" width="5" height="10" fill="#444"/>
<path d="M108 52l13 3v11l-13-4z" fill="#2a2c30"/>
<path d="M95 55L108 54L124 74H92z" fill="#a6a8a4"/>
<path d="M22 60L67 55L80 56L76 67L30 70z" fill="#e2e5e8"/>
<path d="M0 66L30 69L76 66L100 64L98 74H0z" fill="#2c2f35"/>
<ellipse cx="4" cy="55" rx="3.2" ry="3.5" fill="#6a4a40"/>
<path d="M-1 58h9l1 10H-1z" fill="#9a2c2c"/>
<ellipse cx="20" cy="52" rx="3" ry="3.3" fill="#b08a78"/>
<path d="M11 57c2-3 15-3 18 0l2 10H10z" fill="#6474a0"/>
<ellipse cx="46" cy="51" rx="2.6" ry="2.6" fill="#6a5a52"/><path d="M41 54h10v4H41z" fill="#4a4c54"/>
<ellipse cx="52" cy="50.5" rx="2.2" ry="2.5" fill="#6a5a52"/>
<ellipse cx="82" cy="50" rx="3" ry="3.3" fill="#8a6a5a"/>
<path d="M74 55c2-3 13-3 15 1l1 18H74z" fill="#1e2024"/>
<ellipse cx="92" cy="49.5" rx="2.5" ry="3" fill="#8a6a5a"/>
<path d="M86 54c2-2 9-2 11 1l0 12H86z" fill="#5a5e66"/>
<path d="M95 53h5v10h-5z" fill="#3a5ab0"/>
</g>
<rect x="0" y="66.5" width="34" height="7.5" fill="#000" opacity="0.45"/>
</svg>
<span class="t" id="t104" style="left:580.00px;top:114.81px;font-size:5.4px;color:#e8e8e8;font-weight:normal;font-family:'Liberation Sans';transform:scaleX(0.9085);transform-origin:0 0;">АО "НЦИТЭ"</span>
<div class="a" style="left:578.5px;top:123.4px;width:132.5px;height:74.1px;background:#232323;"></div>
<span class="t" id="t105" style="left:623.25px;top:156.29px;font-size:8.6px;color:#f4f4f4;font-weight:bold;font-family:'Liberation Sans';transform:scaleX(1.0229);transform-origin:0 0;">Qazpatent</span>
<div class="a" style="left:579.2px;top:190.9px;width:31.6px;height:6.6px;background:#2a2a2a;"></div>
<svg class="a" style="left:580px;top:191.3px;" width="6" height="6" viewBox="0 0 6 6"><path d="M2 0.8a1 1 0 0 1 2 0v2.2a1 1 0 0 1-2 0z" fill="#e0302a"/><path d="M1 2.6a2 2 0 0 0 4 0M3 4.6v1" fill="none" stroke="#e0302a" stroke-width="0.6"/><path d="M0.5 5.8L5.5 0.3" stroke="#e0302a" stroke-width="0.7"/></svg>
<span class="t" id="t106" style="left:587.00px;top:191.61px;font-size:5.4px;color:#dadada;font-weight:normal;font-family:'Liberation Sans';transform:scaleX(0.8844);transform-origin:0 0;">Qazpatent</span>
<svg class="a" style="left:577.5px;top:198.7px" width="135" height="77.3" viewBox="0 0 135 77.3">
<defs><filter id="bl2" x="-5%" y="-5%" width="110%" height="110%"><feGaussianBlur stdDeviation="1.2"/></filter>
<linearGradient id="wall" x1="0" y1="0" x2="1" y2="0"><stop offset="0" stop-color="#d4d7da"/><stop offset="0.45" stop-color="#dcdfe1"/><stop offset="1" stop-color="#c9ccce"/></linearGradient>
<radialGradient id="face" cx="0.45" cy="0.4" r="0.6"><stop offset="0" stop-color="#d0a894"/><stop offset="1" stop-color="#b48a78"/></radialGradient></defs>
<g filter="url(#bl2)">
<rect width="135" height="77.3" fill="url(#wall)"/>
<rect x="0" y="2" width="135" height="3.5" fill="#4e5256"/>
<rect x="0" y="5.5" width="30" height="3" fill="#bfc3c6"/>
<rect x="31" y="2" width="2.4" height="75" fill="#3e4145"/>
<rect x="41" y="8" width="1" height="68" fill="#b4b8bc"/>
<rect x="44" y="31" width="38" height="1.2" fill="#c0c3c6"/>
<circle cx="56" cy="12" r="0.9" fill="#333"/><circle cx="56" cy="27" r="0.9" fill="#333"/>
<rect x="36" y="62" width="9" height="15.3" fill="#222326"/>
<path d="M66 77.3C66 50 70 20 80 9C90 0 114 -1 126 5C133 10 135 20 135 30V77.3z" fill="#261e1e"/>
<ellipse cx="106" cy="38" rx="20.5" ry="27" fill="url(#face)"/>
<path d="M85 31C86 16 95 8 107 8C119 8 126 15 127 27C121 19 114 15 106 15C97 15 90 21 85 31z" fill="#261e1e"/>
<path d="M86 27C82 45 83 60 89 72L76 74C74 55 76 38 86 27z" fill="#261e1e"/>
<path d="M93 32q5-2.5 9 0M110 32q5-2.5 9 0" stroke="#5a3a34" stroke-width="1.6" fill="none"/>
<path d="M103 43q3 2 6 0" stroke="#9a7060" stroke-width="1" fill="none"/>
<path d="M98 53q8 2.5 15 0" stroke="#7a4a44" stroke-width="1.5" fill="none"/>
<path d="M50 77.3C53 66 62 60 76 57L90 67L106 68L112 77.3z" fill="#232947"/><path d="M110 66L124 58L135 60V77.3H112z" fill="#1e1a22"/>
<path d="M86 64l16 13.3H80z" fill="#171a2a"/>
</g>
<rect x="0.75" y="0.75" width="133.5" height="75.8" fill="none" stroke="#dfe96c" stroke-width="1.5"/>
<rect x="2" y="68.5" width="27" height="7" fill="#000" opacity="0.45"/>
</svg>
<span class="t" id="t107" style="left:580.50px;top:269.21px;font-size:5.4px;color:#ececec;font-weight:normal;font-family:'Liberation Sans';transform:scaleX(0.8844);transform-origin:0 0;">Qazpatent</span>
<div class="a" style="left:578.9px;top:276.2px;width:132.1px;height:74.2px;background:#232323;"></div>
<div class="a" style="left:626.7px;top:296px;width:36.2px;height:35.8px;background:#2f6b1f;"></div>
<div class="a" style="left:644px;top:306.7px;width:2.2px;height:14.3px;background:#ffffff;"></div>
<div class="a" style="left:578.9px;top:344px;width:31.8px;height:6.4px;background:#2a2a2a;"></div>
<svg class="a" style="left:580px;top:344.3px;" width="6" height="6" viewBox="0 0 6 6"><path d="M2 0.8a1 1 0 0 1 2 0v2.2a1 1 0 0 1-2 0z" fill="#e0302a"/><path d="M1 2.6a2 2 0 0 0 4 0M3 4.6v1" fill="none" stroke="#e0302a" stroke-width="0.6"/><path d="M0.5 5.8L5.5 0.3" stroke="#e0302a" stroke-width="0.7"/></svg>
<span class="t" id="t108" style="left:587.00px;top:344.61px;font-size:5.4px;color:#dadada;font-weight:normal;font-family:'Liberation Sans';transform:scaleX(0.8844);transform-origin:0 0;">Qazpatent</span>
<div class="a" style="left:0px;top:389.8px;width:720px;height:15.2px;background:#1c2c37;"></div>
<svg class="a" style="left:5.5px;top:395px;" width="7" height="6.3" viewBox="0 0 7 6.3"><path d="M0 0.3H3.2V3H0zM3.7 0.3H7V3H3.7zM0 3.4H3.2V6.2H0zM3.7 3.4H7V6.2H3.7z" fill="#fff"/></svg>
<div class="a" style="left:18px;top:389.8px;width:108.1px;height:15.2px;background:#f2f2f2;"></div>
<svg class="a" style="left:22px;top:394px;" width="5.5" height="6.5" viewBox="0 0 5.5 6.5"><circle cx="3.4" cy="2.2" r="1.7" fill="none" stroke="#333" stroke-width="0.6"/><path d="M2.2 3.5L0.4 5.8" stroke="#333" stroke-width="0.7"/></svg>
<span class="t" id="t109" style="left:32.50px;top:396.47px;font-size:5.8px;color:#555;font-weight:normal;font-family:'Liberation Sans';transform:scaleX(1.0262);transform-origin:0 0;">Поиск</span>
<svg class="a" style="left:96px;top:391px;" width="30.1" height="14" viewBox="0 0 30.1 14"><defs><filter id="bl3"><feGaussianBlur stdDeviation="0.6"/></filter></defs><g filter="url(#bl3)">
<path d="M6 14c1-6 5-10 12-11c5 0 9 2 12 4v7z" fill="#a09a38"/>
<path d="M8 4c3-2 8-3 12-2c4 1 7 2 10 4l0 -2c-4-2-9-3-14-2c-3 0-6 1-8 2z" fill="#b9b3b0"/>
<path d="M12 6c3 1 5 3 4 6l-2 2h-4c2-2 3-5 2-8z" fill="#ddd6c0"/>
<path d="M17 8c2 0 4 1 4 2l-3 4h-2l2-3z" fill="#19b0e0"/>
<path d="M22 9c3 0 6 1 8 3v2h-9z" fill="#6a8a2a"/>
</g></svg>
<svg class="a" style="left:131.5px;top:394.5px;" width="8" height="7" viewBox="0 0 8 7"><path d="M0.2 0.6h5.6M0.2 6.2h5.6" stroke="#cfcfcf" stroke-width="1"/><path d="M0.9 0.6v5.6M5.1 0.6v5.6" stroke="#cfcfcf" stroke-width="1.2"/><path d="M7.2 0.5v6" stroke="#bbb" stroke-width="0.7"/><circle cx="7.2" cy="2.8" r="0.6" fill="#eee"/></svg>
<svg class="a" style="left:148px;top:394px;" width="10" height="10" viewBox="0 0 10 10"><path d="M9.6 5.2c0-2.8-2-5-4.8-5C2.1 0.2 0 2.4 0 5c0 2.8 2.3 4.8 5.2 4.8 1.5 0 3-0.5 3.9-1.4-2.2 0.8-5-0.3-5.5-2.6h6z" fill="#1e9be0"/><path d="M0 5c0.6-2.3 3.5-3 5-1.8C3.8 3 2.5 3.9 2.3 5.4 2.1 7.6 3.8 9.4 5.2 9.8 2.3 9.6 0 7.6 0 5z" fill="#3ec470"/></svg>
<div class="a" style="left:147px;top:404.2px;width:13px;height:0.8px;background:#7fa6c7;"></div>
<svg class="a" style="left:167.5px;top:394.5px;" width="9.5" height="8" viewBox="0 0 9.5 8"><path d="M0.3 0.6h3.5l1 1.2h4.5V7.6H0.3z" fill="#e6b540"/><rect x="0.3" y="2.6" width="9" height="5" fill="#f6d27a"/><rect x="0.3" y="4.8" width="9" height="0.8" fill="#2a82d0"/></svg>
<svg class="a" style="left:186px;top:393.5px;" width="9" height="9.5" viewBox="0 0 9 9.5"><path d="M0.4 2.8h8.2V9.2H0.4z" fill="#f4f4f4"/><path d="M2.8 2.8V1.6a1.7 1.2 0 0 1 3.4 0v1.2" fill="none" stroke="#f4f4f4" stroke-width="0.6"/><rect x="2.6" y="4.2" width="1.7" height="1.7" fill="#f25022"/><rect x="4.7" y="4.2" width="1.7" height="1.7" fill="#7fba00"/><rect x="2.6" y="6.3" width="1.7" height="1.7" fill="#00a4ef"/><rect x="4.7" y="6.3" width="1.7" height="1.7" fill="#ffb900"/></svg>
<svg class="a" style="left:204.5px;top:394.5px;" width="10" height="7.5" viewBox="0 0 10 7.5"><rect x="0.2" y="0.2" width="9.6" height="7" fill="#1f8fe6"/><path d="M0.2 0.4l4.8 3.6 4.8-3.6" fill="none" stroke="#d4ebfc" stroke-width="0.7"/></svg>
<svg class="a" style="left:222.5px;top:393.5px;" width="10" height="9.5" viewBox="0 0 10 9.5"><circle cx="5" cy="4.8" r="4.6" fill="#8fd0f0"/><circle cx="5" cy="4.8" r="3" fill="#e8f6fc"/><path d="M3 4h3.5v2H3z" fill="#2a8ad0"/></svg>
<div class="a" style="left:222px;top:404.2px;width:11px;height:0.8px;background:#7fa6c7;"></div>
<svg class="a" style="left:241px;top:394px;" width="10" height="9" viewBox="0 0 10 9"><rect x="3" y="0.3" width="6.8" height="8.4" rx="0.5" fill="#3a76c8"/><rect x="0.2" y="1.6" width="5.6" height="5.8" fill="#1d4f9e"/><text x="0.7" y="6.3" font-size="4.6" font-weight="bold" font-family="Liberation Sans" fill="#fff">W</text><path d="M6.5 2.5h2.5M6.5 4h2.5M6.5 5.5h2.5" stroke="#cfe0f6" stroke-width="0.5"/></svg>
<div class="a" style="left:240px;top:404.2px;width:12px;height:0.8px;background:#7fa6c7;"></div>
<div class="a" style="left:255px;top:389.4px;width:18px;height:15.6px;background:#3a4752;"></div>
<svg class="a" style="left:259px;top:393.8px;" width="10" height="9.5" viewBox="0 0 10 9.5"><circle cx="5" cy="4.8" r="4.6" fill="#2d8cff"/><path d="M3 3.2h4L3.1 6.4h4" stroke="#fff" stroke-width="1" fill="none"/></svg>
<div class="a" style="left:255px;top:404.2px;width:18px;height:0.8px;background:#8fb3d2;"></div>
<svg class="a" style="left:571.6px;top:393px;" width="6.5" height="9.5" viewBox="0 0 6.5 9.5"><rect x="1.6" y="0.3" width="2.4" height="6.5" rx="1.2" fill="#5aa0f0"/><circle cx="2.8" cy="7.2" r="2" fill="#3a7ae0"/><rect x="4.8" y="4" width="1.2" height="4" fill="#e04040"/></svg>
<span class="t" id="t110" style="left:582.20px;top:396.20px;font-size:6px;color:#ececec;font-weight:normal;font-family:'Liberation Sans';transform:scaleX(0.8642);transform-origin:0 0;">Temps drop</span>
<svg class="a" style="left:619.5px;top:395.5px;" width="5" height="3" viewBox="0 0 5 3"><path d="M0.4 2.6L2.4 0.6 4.4 2.6" fill="none" stroke="#ddd" stroke-width="0.6"/></svg>
<svg class="a" style="left:628px;top:393.8px;" width="5" height="8" viewBox="0 0 5 8"><rect x="1.3" y="0.3" width="2.4" height="4.5" rx="1.2" fill="#eee"/><path d="M0.5 3.8a2 2 0 0 0 4 0M2.5 5.8v1.5" fill="none" stroke="#eee" stroke-width="0.5"/></svg>
<svg class="a" style="left:636px;top:394.5px;" width="6" height="7" viewBox="0 0 6 7"><rect x="0.4" y="0.4" width="5" height="6" fill="none" stroke="#ddd" stroke-width="0.6"/><rect x="1.6" y="2" width="2.6" height="3" fill="#ddd"/><circle cx="4.6" cy="5.8" r="1" fill="#4aa0ff"/></svg>
<svg class="a" style="left:646.5px;top:394.5px;" width="7" height="7" viewBox="0 0 7 7"><rect x="1.5" y="0.4" width="5" height="4" fill="none" stroke="#ddd" stroke-width="0.6"/><path d="M4 4.5v1.5M2.8 6.2h2.5M0.4 2.4h2" stroke="#ddd" stroke-width="0.6"/></svg>
<svg class="a" style="left:653px;top:394.5px;" width="6.5" height="7" viewBox="0 0 6.5 7"><path d="M0.4 2.2h1.5L3.8 0.5v6L1.9 4.8H0.4z" fill="none" stroke="#ddd" stroke-width="0.6"/><path d="M4.8 2a1.8 1.8 0 0 1 0 3" fill="none" stroke="#ddd" stroke-width="0.5"/></svg>
<span class="t" id="t111" style="left:664.40px;top:396.55px;font-size:5px;color:#e6e6e6;font-weight:normal;font-family:'Liberation Sans';transform:scaleX(0.8487);transform-origin:0 0;">РУС</span>
<span class="t" id="t112" style="left:682.70px;top:393.05px;font-size:5px;color:#e6e6e6;font-weight:normal;font-family:'Liberation Sans';transform:scaleX(0.7990);transform-origin:0 0;">10:43</span>
<span class="t" id="t113" style="left:677.30px;top:399.75px;font-size:5px;color:#e6e6e6;font-weight:normal;font-family:'Liberation Sans';transform:scaleX(0.8190);transform-origin:0 0;">18.10.2023</span>
<svg class="a" style="left:705.5px;top:393.5px;" width="9" height="10" viewBox="0 0 9 10"><path d="M0.4 0.4h6.6v5.2H3L1.6 7V5.6H0.4z" fill="#eee"/><circle cx="6.2" cy="6.6" r="2.6" fill="#1c2935" stroke="#eee" stroke-width="0.5"/><text x="5.3" y="8.3" font-size="3.8" fill="#eee" font-family="Liberation Sans">3</text></svg>
<div class="a" style="left:718.5px;top:389.4px;width:1.5px;height:15.6px;background:#3a4752;"></div>
</body></html>
